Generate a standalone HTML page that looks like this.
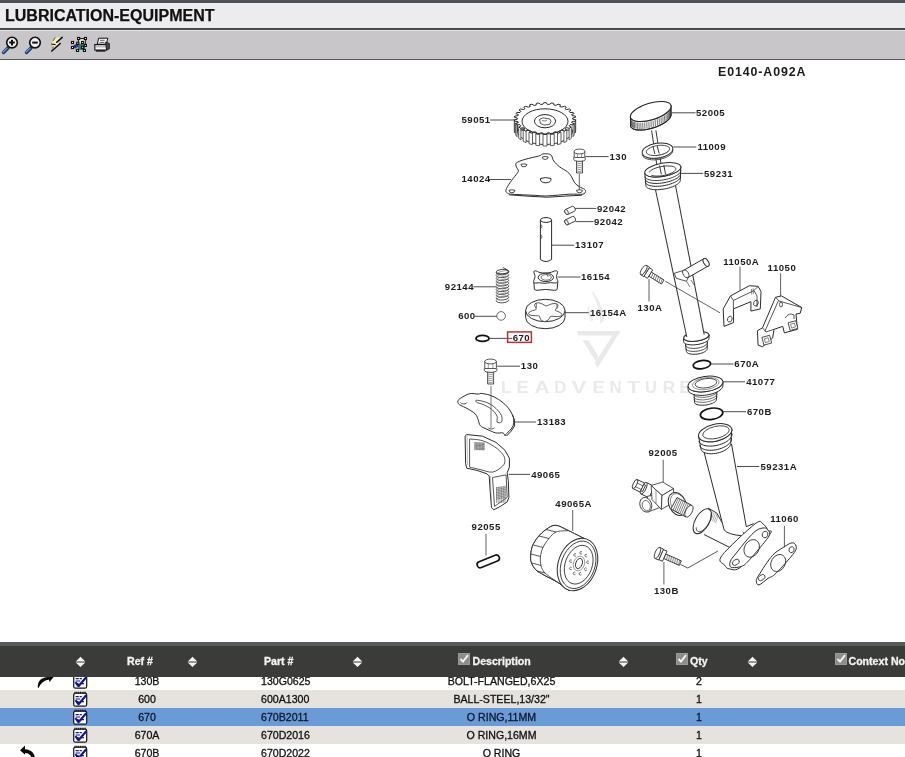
<!DOCTYPE html>
<html><head><meta charset="utf-8">
<style>
html,body{margin:0;padding:0;width:905px;height:757px;overflow:hidden;background:#fff;font-family:"Liberation Sans",sans-serif;}
.abs{position:absolute;}
#topbar{position:absolute;left:0;top:0;width:905px;height:3px;background:#4c5157;}
#title{position:absolute;left:0;top:3px;width:905px;height:25px;background:#ececee;}
#title span{position:absolute;left:5px;top:4px;font-size:16px;line-height:18px;font-weight:bold;color:#111;-webkit-text-stroke:0.25px #111;}
#line1{position:absolute;left:0;top:28px;width:905px;height:2px;background:#47494b;border-bottom:1px solid #e6e6e8;}
#toolbar{position:absolute;left:0;top:31px;width:905px;height:28px;background:#c8c6c9;}
#line2{position:absolute;left:0;top:59px;width:905px;height:1px;background:#555759;}
#diagram{position:absolute;left:0;top:0;width:905px;height:642px;}
#thead{position:absolute;left:0;top:642px;width:905px;height:35px;background:#3b3b39;border-top:4px solid #57595b;box-sizing:border-box;}
.th{position:absolute;top:8px;line-height:14px;color:#f4f4f4;-webkit-text-stroke:0.3px #f4f4f4;font-size:10.6px;font-weight:bold;white-space:nowrap;}
.row{position:absolute;left:0;width:905px;height:18px;}
.td{position:absolute;top:3px;line-height:13px;font-size:10.6px;color:#111;-webkit-text-stroke:0.3px #111;white-space:nowrap;}
.c{transform:translateX(-50%);}
.sel .td{color:#0c1830;-webkit-text-stroke:0.3px #0c1830;}
svg.ic{position:absolute;overflow:visible;}
#diagram,.row,#thead,#title{will-change:transform;}
</style></head><body>
<svg width="0" height="0" style="position:absolute">
 <defs>
  <g id="sorti"><path d="M-0.3 4.4 L4.5 -0.2 L9.3 4.4 Z M-0.3 5.4 L9.3 5.4 L4.5 10 Z" fill="#f4f4f4"/></g>
  <g id="hcb"><rect x="0.5" y="0.5" width="11" height="11" fill="#8d8d8b" stroke="#9a9a98"/><path d="M2.5 6 L5 8.6 L10 2.2" fill="none" stroke="#f4f4f4" stroke-width="1.9"/></g>
  <g id="note"><rect x="0.7" y="2.2" width="13" height="13" rx="1.8" fill="#fdfdfd" stroke="#111" stroke-width="1.2"/><path d="M1.5 1.6 h11.5" stroke="#111" stroke-width="1.6" stroke-dasharray="1 0.8"/><path d="M2.6 5.6 h3.2 M6.6 5.6 h2.2 M2.6 8 h4.5 M8 10.6 h3" stroke="#1a1a8c" stroke-width="1.1"/><path d="M2.4 9.2 L5.5 13.2 L13.2 4.2" fill="none" stroke="#14148f" stroke-width="2.1" stroke-linejoin="round"/><path d="M4 10.5 L5.6 12.6" stroke="#14148f" stroke-width="2.6"/></g>
 </defs>
</svg>
<div id="topbar"></div>
<div id="title"><span>LUBRICATION-EQUIPMENT</span></div>
<div id="line1"></div>
<div id="toolbar">
<svg class="ic" style="left:0;top:-1px" width="120" height="28">
 <!-- zoom in -->
 <path d="M3.5 22.5 L8.2 17.8" stroke="#1d3f6e" stroke-width="3.4" stroke-linecap="round"/>
 <path d="M3.2 22 L7 18.4" stroke="#6c9ccc" stroke-width="1.2" stroke-linecap="round"/>
 <circle cx="12" cy="12.6" r="5.3" fill="#f0f0f0" stroke="#111" stroke-width="1.6"/>
 <path d="M9.2 12.6 H14.8 M12 9.8 V15.4" stroke="#111" stroke-width="2"/>
 <!-- zoom out -->
 <path d="M26.5 22.5 L31.2 17.8" stroke="#1d3f6e" stroke-width="3.4" stroke-linecap="round"/>
 <path d="M26.2 22 L30 18.4" stroke="#6c9ccc" stroke-width="1.2" stroke-linecap="round"/>
 <circle cx="35" cy="12.6" r="5.3" fill="#f0f0f0" stroke="#111" stroke-width="1.6"/>
 <path d="M32.2 12.6 H37.8" stroke="#111" stroke-width="2"/>
  <!-- lightning -->
 <path d="M55.3 7.399999999999999 L62.2 7.399999999999999 L57.2 12.600000000000001 L60.2 13.5 L51.8 21 L53.5 16 L51.2 14 Z" fill="#f2f0b4"/>
 <path d="M62.2 7.399999999999999 L56.7 12.299999999999997" stroke="#0d0d0d" stroke-width="1.5" stroke-linecap="round"/>
 <path d="M60.2 13.5 L51.8 21" stroke="#0d0d0d" stroke-width="1.6" stroke-linecap="round"/>
 <path d="M51.2 14 L55.6 14.600000000000001" stroke="#111" stroke-width="1.1"/>
 <path d="M55.3 7.399999999999999 L53.2 10.799999999999997 M53.4 16.5 L52.6 18.5" stroke="#333" stroke-width="0.8"/>
 <!-- selection -->
 <path d="M71.5 47 L78 42.5 L80 46 L75 48.5 Z" fill="#3a2a8a" transform="translate(0 -30)"/>
 <rect x="79" y="9.5" width="6" height="4.5" fill="#f2ecc0"/>
 <rect x="78" y="13.5" width="7" height="6.5" rx="2" fill="#2e7f78"/>
 <path d="M78.6 8.5 H85.4 V15.4 M78.6 8.5 V13" stroke="#111" stroke-width="0.9" fill="none"/>
 <rect x="77.0" y="6.9" width="3.2" height="3.2" fill="#111"/><rect x="78.1" y="8.0" width="1" height="1" fill="#eee"/>
 <rect x="83.8" y="6.9" width="3.2" height="3.2" fill="#111"/><rect x="84.9" y="8.0" width="1" height="1" fill="#eee"/>
 <rect x="70.9" y="10.9" width="3.2" height="3.2" fill="#111"/><rect x="72.0" y="12.0" width="1" height="1" fill="#eee"/>
 <rect x="70.9" y="15.9" width="3.2" height="3.2" fill="#111"/><rect x="72.0" y="17.0" width="1" height="1" fill="#eee"/>
 <rect x="75.9" y="18.8" width="3.2" height="3.2" fill="#111"/><rect x="77.0" y="19.9" width="1" height="1" fill="#eee"/>
 <rect x="82.8" y="18.8" width="3.2" height="3.2" fill="#111"/><rect x="83.9" y="19.9" width="1" height="1" fill="#eee"/>
 <rect x="83.8" y="13.8" width="3.2" height="3.2" fill="#111"/><rect x="84.9" y="14.9" width="1" height="1" fill="#eee"/>
 <rect x="76.2" y="11.7" width="3.2" height="3.2" fill="#111"/><rect x="77.3" y="12.8" width="1" height="1" fill="#eee"/>
 <rect x="81.0" y="10.9" width="3.2" height="3.2" fill="#111"/><rect x="82.1" y="12.0" width="1" height="1" fill="#eee"/>
 <rect x="81.0" y="15.7" width="3.2" height="3.2" fill="#111"/><rect x="82.1" y="16.8" width="1" height="1" fill="#eee"/>
 <!-- printer -->
 <path d="M98.6 8.200000000000003 L107.8 8.200000000000003 L106.3 14.200000000000003 L97.3 14.200000000000003 Z" fill="#fafafa" stroke="#111" stroke-width="1"/>
 <path d="M99.9 10.299999999999997 H104.7 M99.6 12.399999999999999 H104.4" stroke="#222" stroke-width="0.7"/>
 <path d="M94.8 14.600000000000001 L106.8 14.600000000000001 L106.8 20 L94.8 20 Z" fill="#f6f6f6" stroke="#111" stroke-width="1.1"/>
 <path d="M95 16.799999999999997 H106" stroke="#666" stroke-width="0.6"/>
 <path d="M105.6 12 L109.4 13.5 L109.4 18.799999999999997 L106.5 20 Z" fill="#4a4a4a" stroke="#111" stroke-width="0.8"/>
 <path d="M95.8 20.9 L105.5 20.9" stroke="#0a0a0a" stroke-width="1.4"/>
</svg>
</div>
<div id="line2"></div>
<svg id="diagram" width="905" height="642" viewBox="0 0 905 642">
<style>.lb{font-family:"Liberation Sans",sans-serif;font-weight:bold;font-size:9.6px;letter-spacing:0.5px;fill:#1c1c1c}.code{font-family:"Liberation Sans",sans-serif;font-weight:bold;font-size:12.4px;letter-spacing:0.9px;fill:#1a1a1a}</style>
<text transform="translate(501.00 393) scale(1.061 1)" style="font:bold 16px 'Liberation Sans',sans-serif;fill:#eaeaea">L</text>
<text transform="translate(516.50 393) scale(1.140 1)" style="font:bold 16px 'Liberation Sans',sans-serif;fill:#eaeaea">E</text>
<text transform="translate(534.40 393) scale(1.293 1)" style="font:bold 16px 'Liberation Sans',sans-serif;fill:#eaeaea">A</text>
<text transform="translate(554.20 393) scale(1.052 1)" style="font:bold 16px 'Liberation Sans',sans-serif;fill:#eaeaea">D</text>
<text transform="translate(571.60 393) scale(1.402 1)" style="font:bold 16px 'Liberation Sans',sans-serif;fill:#eaeaea">V</text>
<text transform="translate(592.40 393) scale(1.140 1)" style="font:bold 16px 'Liberation Sans',sans-serif;fill:#eaeaea">E</text>
<text transform="translate(609.40 393) scale(1.052 1)" style="font:bold 16px 'Liberation Sans',sans-serif;fill:#eaeaea">N</text>
<text transform="translate(627.20 393) scale(1.306 1)" style="font:bold 16px 'Liberation Sans',sans-serif;fill:#eaeaea">T</text>
<text transform="translate(645.00 393) scale(1.034 1)" style="font:bold 16px 'Liberation Sans',sans-serif;fill:#eaeaea">U</text>
<text transform="translate(662.80 393) scale(1.078 1)" style="font:bold 16px 'Liberation Sans',sans-serif;fill:#eaeaea">R</text>
<text transform="translate(679.30 393) scale(1.140 1)" style="font:bold 16px 'Liberation Sans',sans-serif;fill:#eaeaea">E</text>
<path d="M576.9 331 L620.6 331 L597.6 367.8 L594.8 363 L612.5 335.6 L578.5 335.6 Z" fill="#e9e9e9"/>
<path d="M582.6 340.2 L588.5 340.2 L598.5 356.5 L595.8 361.5 Z" fill="#e9e9e9"/>
<path d="M590.7 289.6 C597 296 603 306 604.5 319.5 L600.5 324 C600 312 596 300 590.7 289.6 Z" fill="#ececec"/>
<path d="M588.4 304.5 C587 310 587.5 316 591 322 L593.5 320 C591 315 589.5 310 588.4 304.5 Z" fill="#eeeeee"/>
<text x="718" y="76.2" class="code">E0140-A092A</text>
<path d="M517.3 118.6 L517.3 130.1 L572.7 130.1 L572.6 131.2 L572.4 132.3 L571.9 133.4 L571.3 134.5 L570.6 135.6 L569.7 136.6 L568.6 137.6 L567.4 138.5 L566.1 139.4 L564.6 140.2 L563.0 141.0 L561.3 141.7 L559.5 142.3 L557.6 142.9 L555.6 143.4 L553.6 143.7 L551.5 144.0 L549.3 144.3 L547.2 144.4 L545.0 144.4 L542.8 144.4 L540.7 144.3 L538.5 144.0 L536.4 143.7 L534.4 143.4 L532.4 142.9 L530.5 142.3 L528.7 141.7 L527.0 141.0 L525.4 140.2 L523.9 139.4 L522.6 138.5 L521.4 137.6 L520.3 136.6 L519.4 135.6 L518.7 134.5 L518.1 133.4 L517.6 132.3 L517.4 131.2 L517.3 130.1 L572.7 118.6 Z" fill="#fff" stroke="#2b2b2b" stroke-width="1.0"/>
<path d="M575.7 119.5 L575.2 121.5 L575.2 133.0 L575.7 131.0 Z" fill="#fff" stroke="#2b2b2b" stroke-width="0.75" />
<path d="M574.3 123.3 L573.0 125.2 L573.0 136.7 L574.3 134.8 Z" fill="#fff" stroke="#2b2b2b" stroke-width="0.75" />
<path d="M571.3 126.8 L569.1 128.4 L569.1 139.9 L571.3 138.3 Z" fill="#fff" stroke="#2b2b2b" stroke-width="0.75" />
<path d="M566.8 129.8 L563.9 131.1 L563.9 142.6 L566.8 141.3 Z" fill="#fff" stroke="#2b2b2b" stroke-width="0.75" />
<path d="M561.0 132.2 L557.5 133.1 L557.5 144.6 L561.0 143.7 Z" fill="#fff" stroke="#2b2b2b" stroke-width="0.75" />
<path d="M554.2 133.8 L550.4 134.2 L550.4 145.7 L554.2 145.3 Z" fill="#fff" stroke="#2b2b2b" stroke-width="0.75" />
<path d="M547.0 134.5 L543.0 134.5 L543.0 146.0 L547.0 146.0 Z" fill="#fff" stroke="#2b2b2b" stroke-width="0.75" />
<path d="M539.6 134.2 L535.8 133.8 L535.8 145.3 L539.6 145.7 Z" fill="#fff" stroke="#2b2b2b" stroke-width="0.75" />
<path d="M532.5 133.1 L529.0 132.2 L529.0 143.7 L532.5 144.6 Z" fill="#fff" stroke="#2b2b2b" stroke-width="0.75" />
<path d="M526.1 131.1 L523.2 129.8 L523.2 141.3 L526.1 142.6 Z" fill="#fff" stroke="#2b2b2b" stroke-width="0.75" />
<path d="M520.9 128.4 L518.7 126.8 L518.7 138.3 L520.9 139.9 Z" fill="#fff" stroke="#2b2b2b" stroke-width="0.75" />
<path d="M517.0 125.2 L515.7 123.3 L515.7 134.8 L517.0 136.7 Z" fill="#fff" stroke="#2b2b2b" stroke-width="0.75" />
<path d="M514.8 121.5 L514.3 119.5 L514.3 131.0 L514.8 133.0 Z" fill="#fff" stroke="#2b2b2b" stroke-width="0.75" />
<path d="M572.7 119.2 L575.6 119.9 L575.3 121.2 L572.1 121.5 L571.6 122.6 L574.1 123.6 L573.2 124.8 L570.0 124.7 L569.0 125.8 L571.0 127.1 L569.5 128.2 L566.5 127.7 L565.0 128.5 L566.3 130.1 L564.4 130.9 L561.7 130.1 L559.8 130.7 L560.4 132.4 L558.1 133.0 L555.9 131.8 L553.8 132.2 L553.6 133.9 L551.1 134.2 L549.5 132.8 L547.2 132.9 L546.3 134.5 L543.7 134.5 L542.8 132.9 L540.5 132.8 L538.9 134.2 L536.4 133.9 L536.2 132.2 L534.1 131.8 L531.9 133.0 L529.6 132.4 L530.2 130.7 L528.3 130.1 L525.6 130.9 L523.7 130.1 L525.0 128.5 L523.5 127.7 L520.5 128.2 L519.0 127.1 L521.0 125.8 L520.0 124.7 L516.8 124.8 L515.9 123.6 L518.4 122.6 L517.9 121.5 L514.7 121.2 L514.4 119.9 L517.3 119.2 L517.3 118.0 L514.4 117.3 L514.7 116.0 L517.9 115.7 L518.4 114.6 L515.9 113.6 L516.8 112.4 L520.0 112.5 L521.0 111.4 L519.0 110.1 L520.5 109.0 L523.5 109.5 L525.0 108.7 L523.7 107.1 L525.6 106.3 L528.3 107.1 L530.2 106.5 L529.6 104.8 L531.9 104.2 L534.1 105.4 L536.2 105.0 L536.4 103.3 L538.9 103.0 L540.5 104.4 L542.8 104.3 L543.7 102.7 L546.3 102.7 L547.2 104.3 L549.5 104.4 L551.1 103.0 L553.6 103.3 L553.8 105.0 L555.9 105.4 L558.1 104.2 L560.4 104.8 L559.8 106.5 L561.7 107.1 L564.4 106.3 L566.3 107.1 L565.0 108.7 L566.5 109.5 L569.5 109.0 L571.0 110.1 L569.0 111.4 L570.0 112.5 L573.2 112.4 L574.1 113.6 L571.6 114.6 L572.1 115.7 L575.3 116.0 L575.6 117.3 L572.7 118.0 Z" fill="#fff" stroke="#2b2b2b" stroke-width="1.0" />
<ellipse cx="545.0" cy="121.4" rx="23.0" ry="12.6" transform="rotate(0 545.0 121.4)" fill="none" stroke="#2b2b2b" stroke-width="1.0"/>
<ellipse cx="545.0" cy="121.2" rx="10.6" ry="6.6" transform="rotate(0 545.0 121.2)" fill="none" stroke="#2b2b2b" stroke-width="1.0"/>
<path d="M539.5 119.5 L543 117.8 L546 118.3 L550 119 L551 121.5 L549.5 124.5 L544 125 L540.5 123.5 Z" fill="none" stroke="#2b2b2b" stroke-width="0.8" />
<path d="M542 120.5 L545 121 L547 120" fill="none" stroke="#2b2b2b" stroke-width="0.6" />
<line x1="490.0" y1="120.0" x2="514.5" y2="120.0" stroke="#383838" stroke-width="0.9"/>
<text x="461.5" y="123.4" class="lb">59051</text>
<path d="M516.4 162.9 C517.8 161.7 521.2 160.6 524.9 159.4 C528.6 158.2 535.8 156.9 538.8 156.0 C541.8 155.1 541.1 154.3 542.7 154.0 C544.4 153.7 547.2 153.7 548.7 154.0 C550.2 154.3 550.9 154.8 551.7 156.0 C552.5 157.2 552.4 159.1 553.7 160.9 C555.0 162.7 557.3 165.1 559.6 166.9 C561.9 168.7 565.6 170.2 567.6 171.9 C569.6 173.6 570.4 175.0 571.6 176.8 C572.8 178.6 573.3 181.1 574.6 182.8 C575.9 184.5 577.9 185.7 579.5 186.8 C581.1 187.9 583.5 188.5 584.5 189.3 C585.5 190.1 585.8 190.9 585.5 191.7 C585.2 192.5 585.1 193.8 582.5 194.2 C579.9 194.6 575.4 193.9 569.6 194.2 C563.8 194.5 553.3 195.7 547.7 195.9 C542.1 196.1 541.8 195.7 535.8 195.4 C529.8 195.1 516.7 194.6 511.9 194.2 C507.1 193.8 508.0 193.4 507.0 192.7 C506.0 192.0 505.5 191.5 506.0 189.8 C506.5 188.2 508.2 185.3 509.9 182.8 C511.5 180.3 514.5 176.9 515.9 174.9 C517.3 172.9 518.3 172.2 518.4 170.9 C518.5 169.6 516.7 168.2 516.4 166.9 C516.1 165.6 515.0 164.2 516.4 162.9 Z" fill="#fff" stroke="#2b2b2b" stroke-width="1.0" />
<path d="M509 194.8 Q530 196.5 547.7 197.2 Q566 196 582 195.2" fill="none" stroke="#2b2b2b" stroke-width="1.0" />
<path d="M520.9 164.4 Q523.9 163.3 526.9 164.4 Q526.6 167.0 523.9 166.8 Q521.2 167.0 520.9 164.4 Z" fill="none" stroke="#2b2b2b" stroke-width="0.85" />
<path d="M542.2 157.0 Q545.2 155.9 548.2 157.0 Q547.9 159.6 545.2 159.4 Q542.5 159.6 542.2 157.0 Z" fill="none" stroke="#2b2b2b" stroke-width="0.85" />
<path d="M508.9 190.3 Q511.9 189.2 514.9 190.3 Q514.6 192.9 511.9 192.7 Q509.2 192.9 508.9 190.3 Z" fill="none" stroke="#2b2b2b" stroke-width="0.85" />
<path d="M576.5 190.3 Q579.5 189.2 582.5 190.3 Q582.2 192.9 579.5 192.7 Q576.8 192.9 576.5 190.3 Z" fill="none" stroke="#2b2b2b" stroke-width="0.85" />
<path d="M540.4 178.5 Q545.7 176.6 551 178.5 Q551.5 182.6 545.7 182.8 Q540 182.6 540.4 178.5 Z" fill="none" stroke="#2b2b2b" stroke-width="1.0" />
<line x1="488.0" y1="179.5" x2="511.0" y2="179.5" stroke="#383838" stroke-width="0.9"/>
<text x="461.5" y="182.4" class="lb">14024</text>
<path d="M576.5 160 L576.5 173 L582.5 173 L582.5 160 Z" fill="#fff" stroke="#2b2b2b" stroke-width="0.8" />
<line x1="576.5" y1="162.1" x2="582.5" y2="160.9" stroke="#555" stroke-width="0.6"/>
<line x1="576.5" y1="164.1" x2="582.5" y2="162.9" stroke="#555" stroke-width="0.6"/>
<line x1="576.5" y1="166.1" x2="582.5" y2="164.9" stroke="#555" stroke-width="0.6"/>
<line x1="576.5" y1="168.1" x2="582.5" y2="166.9" stroke="#555" stroke-width="0.6"/>
<line x1="576.5" y1="170.1" x2="582.5" y2="168.9" stroke="#555" stroke-width="0.6"/>
<line x1="576.5" y1="172.1" x2="582.5" y2="170.9" stroke="#555" stroke-width="0.6"/>
<path d="M573.7 157.5 L573.7 159.5 A5.8 1.8 0 0 0 585.3 159.5 L585.3 157.5" fill="#fff" stroke="#2b2b2b" stroke-width="0.8" />
<path d="M574.2 151.5 L574.2 157.5 L584.8 157.5 L584.8 151.5 Z" fill="#fff" stroke="#2b2b2b" stroke-width="0.8" />
<ellipse cx="579.5" cy="151.5" rx="5.3" ry="2.4" transform="rotate(0 579.5 151.5)" fill="#fff" stroke="#2b2b2b" stroke-width="0.8"/>
<line x1="577.4" y1="153.5" x2="577.4" y2="157.5" stroke="#555" stroke-width="0.6"/>
<line x1="581.6" y1="153.5" x2="581.6" y2="157.5" stroke="#555" stroke-width="0.6"/>
<line x1="579.3" y1="174.0" x2="579.3" y2="190.0" stroke="#383838" stroke-width="0.8"/>
<line x1="585.5" y1="156.6" x2="608.7" y2="156.6" stroke="#383838" stroke-width="0.9"/>
<text x="609.5" y="159.5" class="lb">130</text>
<g transform="translate(566.5 212) rotate(-24.6)">
<path d="M0 -2.7 L7.7 -2.7 A1.49 2.7 0 0 1 7.7 2.7 L0 2.7 A1.49 2.7 0 0 1 0 -2.7 Z" fill="#fff" stroke="#2b2b2b" stroke-width="0.8" />
<ellipse cx="0.0" cy="0.0" rx="1.5" ry="2.7" transform="rotate(0 0.0 0.0)" fill="#fff" stroke="#2b2b2b" stroke-width="0.8"/>
</g>
<g transform="translate(566.5 222.3) rotate(-25.6)">
<path d="M0 -2.7 L8.1 -2.7 A1.49 2.7 0 0 1 8.1 2.7 L0 2.7 A1.49 2.7 0 0 1 0 -2.7 Z" fill="#fff" stroke="#2b2b2b" stroke-width="0.8" />
<ellipse cx="0.0" cy="0.0" rx="1.5" ry="2.7" transform="rotate(0 0.0 0.0)" fill="#fff" stroke="#2b2b2b" stroke-width="0.8"/>
</g>
<line x1="575.0" y1="208.4" x2="596.3" y2="208.4" stroke="#383838" stroke-width="0.9"/>
<text x="597.0" y="211.7" class="lb">92042</text>
<line x1="575.5" y1="221.6" x2="593.5" y2="221.6" stroke="#383838" stroke-width="0.9"/>
<text x="594.0" y="225.0" class="lb">92042</text>
<path d="M540.4 220 L540.4 259.5 Q546 263.5 551.6 259.5 L551.6 220" fill="#fff" stroke="#2b2b2b" stroke-width="1.0" />
<ellipse cx="546.0" cy="220.0" rx="5.6" ry="2.4" transform="rotate(0 546.0 220.0)" fill="#fff" stroke="#2b2b2b" stroke-width="1.0"/>
<path d="M540.6 224.6 a1.3 1.8 0 0 1 0 3.6" fill="none" stroke="#2b2b2b" stroke-width="0.7" />
<path d="M540.6 235 a1.3 1.8 0 0 1 0 3.6" fill="none" stroke="#2b2b2b" stroke-width="0.7" />
<line x1="551.6" y1="245.2" x2="574.2" y2="245.2" stroke="#383838" stroke-width="0.9"/>
<text x="575.0" y="247.7" class="lb">13107</text>
<path d="M533.8 281.8 L534.4 289 Q535 290.5 537 290.3 Q545 288.6 554.5 290.3 Q557 290.5 557.2 289 L557.8 281.5" fill="#fff" stroke="#2b2b2b" stroke-width="1.0" />
<path d="M535.5 270.8 C536.5 270.9 538.4 272.2 540.0 272.6 C541.6 273.0 543.3 273.0 545.0 273.0 C546.7 273.0 548.2 273.0 550.0 272.6 C551.8 272.2 554.2 270.9 555.5 270.8 C556.8 270.7 557.5 271.1 557.6 272.0 C557.8 272.9 556.4 274.9 556.4 276.5 C556.4 278.1 557.9 280.4 557.8 281.5 C557.6 282.6 556.7 282.8 555.5 283.0 C554.3 283.2 552.2 282.6 550.5 282.6 C548.8 282.7 546.8 283.3 545.0 283.3 C543.2 283.3 541.2 282.9 539.5 282.8 C537.8 282.8 536.0 283.2 535.0 283.0 C534.0 282.8 533.6 282.6 533.6 281.5 C533.6 280.4 535.0 278.1 535.0 276.5 C535.0 274.9 533.7 272.9 533.8 272.0 C533.9 271.1 534.5 270.7 535.5 270.8 Z" fill="#fff" stroke="#2b2b2b" stroke-width="1.0" />
<ellipse cx="545.8" cy="277.4" rx="7.7" ry="4.2" transform="rotate(0 545.8 277.4)" fill="#fff" stroke="#2b2b2b" stroke-width="1.0"/>
<ellipse cx="546.2" cy="277.4" rx="5.2" ry="2.8" transform="rotate(0 546.2 277.4)" fill="none" stroke="#2b2b2b" stroke-width="0.7"/>
<path d="M546 274 Q548 275 548 277" fill="none" stroke="#2b2b2b" stroke-width="0.6" />
<line x1="557.5" y1="277.0" x2="580.5" y2="277.0" stroke="#383838" stroke-width="0.9"/>
<text x="581.0" y="280.2" class="lb">16154</text>
<path d="M525.6 310.5 L525.6 317.5 A19.7 11.2 0 0 0 565 317.5 L565 310.5" fill="#fff" stroke="#2b2b2b" stroke-width="1.0" />
<ellipse cx="545.3" cy="310.5" rx="19.7" ry="11.2" transform="rotate(0 545.3 310.5)" fill="#fff" stroke="#2b2b2b" stroke-width="1.0"/>
<path d="M558.0 311.5 C558.6 311.8 559.3 312.0 559.9 312.4 C560.4 312.7 561.0 313.1 561.3 313.4 C561.7 313.8 561.9 314.2 562.0 314.5 C562.0 314.9 561.8 315.3 561.5 315.5 C561.1 315.8 560.6 316.1 559.9 316.2 C559.3 316.4 558.5 316.5 557.7 316.5 C556.9 316.6 556.0 316.5 555.3 316.5 C554.5 316.5 553.7 316.4 553.1 316.3 C552.5 316.3 552.0 316.2 551.5 316.2 C551.1 316.3 550.8 316.3 550.6 316.5 C550.3 316.6 550.1 316.9 549.9 317.2 C549.7 317.5 549.6 317.9 549.4 318.3 C549.1 318.7 548.9 319.1 548.5 319.5 C548.1 319.9 547.7 320.4 547.2 320.7 C546.7 321.0 546.1 321.2 545.5 321.3 C544.9 321.5 544.3 321.5 543.7 321.4 C543.1 321.3 542.5 321.1 542.0 320.8 C541.6 320.5 541.2 320.1 540.8 319.6 C540.5 319.2 540.3 318.7 540.2 318.3 C540.0 317.9 539.9 317.5 539.8 317.1 C539.7 316.8 539.6 316.4 539.5 316.2 C539.3 316.0 539.1 315.9 538.7 315.8 C538.4 315.7 537.9 315.7 537.4 315.7 C536.8 315.6 536.1 315.7 535.4 315.7 C534.6 315.7 533.8 315.7 533.0 315.6 C532.2 315.5 531.4 315.4 530.7 315.2 C530.0 315.1 529.4 314.8 529.0 314.5 C528.7 314.3 528.4 313.9 528.4 313.6 C528.4 313.2 528.6 312.8 528.9 312.5 C529.3 312.1 529.8 311.8 530.4 311.5 C531.0 311.2 531.8 310.9 532.4 310.7 C533.1 310.5 533.8 310.3 534.4 310.2 C534.9 310.0 535.4 309.9 535.7 309.7 C536.0 309.5 536.2 309.4 536.3 309.2 C536.3 308.9 536.2 308.7 536.0 308.4 C535.9 308.1 535.6 307.7 535.4 307.3 C535.2 306.9 534.9 306.5 534.8 306.0 C534.6 305.6 534.6 305.1 534.7 304.7 C534.8 304.2 535.0 303.8 535.3 303.5 C535.7 303.2 536.2 303.0 536.8 302.9 C537.3 302.8 538.0 302.8 538.7 302.8 C539.4 302.9 540.2 303.1 540.8 303.4 C541.5 303.6 542.2 303.9 542.8 304.2 C543.3 304.5 543.9 304.8 544.3 305.1 C544.8 305.3 545.1 305.5 545.5 305.7 C545.9 305.8 546.2 305.8 546.6 305.8 C546.9 305.7 547.3 305.6 547.8 305.4 C548.2 305.3 548.8 305.0 549.4 304.7 C550.0 304.5 550.7 304.2 551.4 304.0 C552.1 303.8 552.9 303.6 553.6 303.5 C554.3 303.4 555.1 303.4 555.7 303.5 C556.3 303.6 556.8 303.8 557.2 304.1 C557.6 304.4 557.8 304.8 557.9 305.2 C558.0 305.6 557.9 306.0 557.7 306.5 C557.5 306.9 557.2 307.4 556.9 307.8 C556.6 308.2 556.2 308.5 555.9 308.9 C555.6 309.2 555.4 309.5 555.3 309.7 C555.2 309.9 555.2 310.1 555.4 310.3 C555.6 310.5 555.9 310.7 556.4 310.9 C556.8 311.0 557.4 311.2 558.0 311.5 Z" fill="#fff" stroke="#2b2b2b" stroke-width="0.8" />
<line x1="536.2" y1="303.0" x2="536.5" y2="307.8" stroke="#383838" stroke-width="0.7"/>
<line x1="556.8" y1="303.9" x2="557.1" y2="308.7" stroke="#383838" stroke-width="0.7"/>
<line x1="565.0" y1="312.7" x2="588.8" y2="312.7" stroke="#383838" stroke-width="0.9"/>
<text x="590.0" y="315.9" class="lb">16154A</text>
<path d="M502.7 267.5 Q507 268.5 507.9 271.5" fill="none" stroke="#2b2b2b" stroke-width="0.8" />
<path d="M496.2 272.5 C496.2 276.1 508.8 275.3 508.8 271.7" fill="none" stroke="#2b2b2b" stroke-width="0.85" />
<path d="M508.8 271.7 C508.8 269.3 497 271.0 496.2 275.3" fill="none" stroke="#555" stroke-width="0.6" />
<path d="M496.2 275.3 C496.2 278.9 508.8 278.1 508.8 274.5" fill="none" stroke="#2b2b2b" stroke-width="0.85" />
<path d="M508.8 274.5 C508.8 272.1 497 273.8 496.2 278.1" fill="none" stroke="#555" stroke-width="0.6" />
<path d="M496.2 278.1 C496.2 281.7 508.8 280.9 508.8 277.3" fill="none" stroke="#2b2b2b" stroke-width="0.85" />
<path d="M508.8 277.3 C508.8 274.9 497 276.6 496.2 280.9" fill="none" stroke="#555" stroke-width="0.6" />
<path d="M496.2 280.9 C496.2 284.5 508.8 283.7 508.8 280.1" fill="none" stroke="#2b2b2b" stroke-width="0.85" />
<path d="M508.8 280.1 C508.8 277.7 497 279.4 496.2 283.7" fill="none" stroke="#555" stroke-width="0.6" />
<path d="M496.2 283.7 C496.2 287.3 508.8 286.5 508.8 282.9" fill="none" stroke="#2b2b2b" stroke-width="0.85" />
<path d="M508.8 282.9 C508.8 280.5 497 282.2 496.2 286.5" fill="none" stroke="#555" stroke-width="0.6" />
<path d="M496.2 286.5 C496.2 290.1 508.8 289.3 508.8 285.7" fill="none" stroke="#2b2b2b" stroke-width="0.85" />
<path d="M508.8 285.7 C508.8 283.3 497 285.0 496.2 289.3" fill="none" stroke="#555" stroke-width="0.6" />
<path d="M496.2 289.3 C496.2 292.9 508.8 292.1 508.8 288.5" fill="none" stroke="#2b2b2b" stroke-width="0.85" />
<path d="M508.8 288.5 C508.8 286.1 497 287.8 496.2 292.1" fill="none" stroke="#555" stroke-width="0.6" />
<path d="M496.2 292.1 C496.2 295.7 508.8 294.9 508.8 291.3" fill="none" stroke="#2b2b2b" stroke-width="0.85" />
<path d="M508.8 291.3 C508.8 288.9 497 290.6 496.2 294.9" fill="none" stroke="#555" stroke-width="0.6" />
<path d="M496.2 294.9 C496.2 298.5 508.8 297.7 508.8 294.1" fill="none" stroke="#2b2b2b" stroke-width="0.85" />
<path d="M508.8 294.1 C508.8 291.7 497 293.4 496.2 297.7" fill="none" stroke="#555" stroke-width="0.6" />
<path d="M496.2 297.7 C496.2 301.3 508.8 300.5 508.8 296.9" fill="none" stroke="#2b2b2b" stroke-width="0.85" />
<path d="M508.8 296.9 C508.8 294.5 497 296.2 496.2 300.5" fill="none" stroke="#555" stroke-width="0.6" />
<path d="M496.2 300.5 C496.2 304.1 508.8 303.3 508.8 299.7" fill="none" stroke="#2b2b2b" stroke-width="0.85" />
<ellipse cx="502.5" cy="271.6" rx="6.3" ry="2.2" transform="rotate(-4 502.5 271.6)" fill="none" stroke="#2b2b2b" stroke-width="0.85"/>
<line x1="473.3" y1="286.8" x2="496.0" y2="286.8" stroke="#383838" stroke-width="0.9"/>
<text x="444.8" y="289.8" class="lb">92144</text>
<circle cx="501.1" cy="315.9" r="4.3" fill="#fff" stroke="#444" stroke-width="0.8"/>
<line x1="475.0" y1="316.3" x2="496.8" y2="316.3" stroke="#383838" stroke-width="0.9"/>
<text x="458.2" y="319.0" class="lb">600</text>
<ellipse cx="482.5" cy="338.4" rx="6.5" ry="3.0" transform="rotate(0 482.5 338.4)" fill="none" stroke="#111" stroke-width="1.8"/>
<line x1="489.2" y1="338.4" x2="512.3" y2="338.4" stroke="#383838" stroke-width="0.9"/>
<rect x="507.6" y="331.9" width="23.8" height="10.5" fill="none" stroke="#b8303c" stroke-width="1.5"/>
<text x="512.7" y="341.3" class="lb">670</text>
<path d="M487.6 371 L487.6 384 L493.6 384 L493.6 371 Z" fill="#fff" stroke="#2b2b2b" stroke-width="0.8" />
<line x1="487.6" y1="373.1" x2="493.6" y2="371.9" stroke="#555" stroke-width="0.6"/>
<line x1="487.6" y1="375.1" x2="493.6" y2="373.9" stroke="#555" stroke-width="0.6"/>
<line x1="487.6" y1="377.1" x2="493.6" y2="375.9" stroke="#555" stroke-width="0.6"/>
<line x1="487.6" y1="379.1" x2="493.6" y2="377.9" stroke="#555" stroke-width="0.6"/>
<line x1="487.6" y1="381.1" x2="493.6" y2="379.9" stroke="#555" stroke-width="0.6"/>
<line x1="487.6" y1="383.1" x2="493.6" y2="381.9" stroke="#555" stroke-width="0.6"/>
<path d="M484.3 368.5 L484.3 370.5 A6.3 1.8 0 0 0 496.90000000000003 370.5 L496.90000000000003 368.5" fill="#fff" stroke="#2b2b2b" stroke-width="0.8" />
<path d="M484.8 361.5 L484.8 368.5 L496.40000000000003 368.5 L496.40000000000003 361.5 Z" fill="#fff" stroke="#2b2b2b" stroke-width="0.8" />
<ellipse cx="490.6" cy="361.5" rx="5.8" ry="2.4" transform="rotate(0 490.6 361.5)" fill="#fff" stroke="#2b2b2b" stroke-width="0.8"/>
<line x1="488.3" y1="363.5" x2="488.3" y2="368.5" stroke="#555" stroke-width="0.6"/>
<line x1="492.9" y1="363.5" x2="492.9" y2="368.5" stroke="#555" stroke-width="0.6"/>
<line x1="497.2" y1="366.2" x2="520.0" y2="366.2" stroke="#383838" stroke-width="0.9"/>
<text x="520.8" y="369.0" class="lb">130</text>
<path d="M457.9 401.0 C458.1 399.9 458.9 399.3 460.8 398.1 C462.7 396.9 466.6 394.4 469.5 393.7 C472.4 393.0 476.3 394.2 478.2 394.1 C480.1 394.1 479.2 393.2 481.1 393.4 C483.1 393.6 487.0 394.2 489.9 395.2 C492.8 396.2 495.7 397.6 498.6 399.5 C501.5 401.4 505.0 404.2 507.3 406.8 C509.6 409.4 511.3 412.6 512.4 414.8 C513.5 417.0 513.7 418.1 513.8 419.9 C513.9 421.7 513.7 424.0 513.1 425.7 C512.5 427.4 511.4 428.6 510.2 430.0 C509.0 431.4 506.6 433.4 505.8 434.4 C505.0 435.4 505.6 436.1 505.1 435.8 C504.6 435.6 504.5 433.4 502.9 432.9 C501.3 432.4 498.3 433.5 495.7 432.9 C493.1 432.3 489.6 430.5 487.0 429.3 C484.4 428.1 481.9 427.3 480.4 425.7 C478.9 424.1 479.0 421.8 478.2 419.9 C477.4 417.9 477.0 415.8 475.3 414.0 C473.6 412.2 470.8 410.6 468.1 409.0 C465.5 407.4 461.1 405.9 459.4 404.6 C457.7 403.3 457.7 402.1 457.9 401.0 Z" fill="#fff" stroke="#2b2b2b" stroke-width="1.0" />
<path d="M512.4 414.8 Q515.5 420 514.6 426 Q512 431 506.5 436" fill="none" stroke="#2b2b2b" stroke-width="1.0" />
<path d="M476.1 400.3 C477.1 400.1 480.7 400.7 483.0 401.3 C485.3 401.9 487.7 402.7 489.9 403.9 C492.1 405.1 494.1 406.6 496.0 408.5 C497.9 410.4 500.6 413.2 501.5 415.5 C502.4 417.8 502.2 420.9 501.5 422.0 C500.8 423.1 497.8 423.0 497.1 422.0 C496.4 421.0 497.9 418.2 497.1 416.2 C496.3 414.2 494.1 411.6 492.5 410.0 C490.9 408.4 489.4 407.8 487.7 406.8 C485.9 405.8 483.8 404.7 482.0 404.0 C480.2 403.3 477.8 403.0 476.8 402.4 C475.8 401.8 475.1 400.5 476.1 400.3 Z" fill="#fff" stroke="#2b2b2b" stroke-width="0.8" />
<path d="M460.5 402.4 A3.3 1.9 0 0 0 467 402.4" fill="none" stroke="#2b2b2b" stroke-width="0.8" />
<path d="M488.3 427.5 A3 1.5 0 0 0 494.3 427.5" fill="none" stroke="#2b2b2b" stroke-width="0.8" />
<line x1="491.0" y1="386.0" x2="491.0" y2="428.0" stroke="#555" stroke-width="0.8"/>
<line x1="514.0" y1="422.0" x2="536.0" y2="422.0" stroke="#383838" stroke-width="0.9"/>
<text x="537.0" y="425.2" class="lb">13183</text>
<path d="M465.1 436.2 L466.7 434.5 L482.5 436.2 L496.0 442.4 L504.9 450.2 L509.4 458.1 L509.4 467.1 L507.2 472.7 L508.3 480.6 L508.9 497.4 L507.2 501.9 L500.4 506.4 L493.7 509.8 L491.5 507.5 L490.3 492.9 L489.2 476.1 L487.0 473.8 L476.9 470.4 L466.7 468.2 L465.6 463.7 Z" fill="#fff" stroke="#2b2b2b" stroke-width="1.0" />
<path d="M469.6 439.0 C471.8 439.3 478.3 439.4 482.5 440.7 C486.7 442.0 491.4 444.6 494.8 446.9 C498.2 449.1 501.0 452.0 502.7 454.2 C504.4 456.4 504.9 458.3 504.9 460.3 C504.9 462.3 504.8 464.0 502.7 466.0 C500.6 468.0 496.4 471.5 492.6 472.1 C488.8 472.7 483.8 470.3 480.0 469.5 C476.2 468.7 471.3 467.5 469.6 467.1" fill="#fff" stroke="#2b2b2b" stroke-width="0.8" />
<path d="M469.6 439 L469.6 467.1" fill="none" stroke="#2b2b2b" stroke-width="0.8" />
<path d="M492.5 477.5 L506.1 474.9 L507.2 497.4 L494.5 506.4 Z" fill="#fff" stroke="#2b2b2b" stroke-width="0.8" />
<path d="M467 435 L467.5 465 M490.3 476 L491.5 506" fill="none" stroke="#777" stroke-width="0.5" />
<g stroke="#444" stroke-width="0.55">
<line x1="474.6" y1="442.6" x2="484.7" y2="443.3" stroke="#555" stroke-width="0.55"/>
<line x1="474.6" y1="443.9" x2="484.7" y2="444.6" stroke="#555" stroke-width="0.55"/>
<line x1="474.6" y1="445.2" x2="484.7" y2="445.9" stroke="#555" stroke-width="0.55"/>
<line x1="474.6" y1="446.5" x2="484.7" y2="447.2" stroke="#555" stroke-width="0.55"/>
<line x1="474.6" y1="447.8" x2="484.7" y2="448.5" stroke="#555" stroke-width="0.55"/>
<line x1="474.6" y1="449.1" x2="484.7" y2="449.8" stroke="#555" stroke-width="0.55"/>
<line x1="474.8" y1="442.3" x2="474.8" y2="450.2" stroke="#555" stroke-width="0.55"/>
<line x1="476.3" y1="442.3" x2="476.3" y2="450.2" stroke="#555" stroke-width="0.55"/>
<line x1="477.8" y1="442.3" x2="477.8" y2="450.2" stroke="#555" stroke-width="0.55"/>
<line x1="479.3" y1="442.3" x2="479.3" y2="450.2" stroke="#555" stroke-width="0.55"/>
<line x1="480.8" y1="442.3" x2="480.8" y2="450.2" stroke="#555" stroke-width="0.55"/>
<line x1="482.3" y1="442.3" x2="482.3" y2="450.2" stroke="#555" stroke-width="0.55"/>
<line x1="483.8" y1="442.3" x2="483.8" y2="450.2" stroke="#555" stroke-width="0.55"/>
<line x1="496.0" y1="488.0" x2="506.0" y2="486.0" stroke="#555" stroke-width="0.55"/>
<line x1="496.0" y1="489.6" x2="506.0" y2="487.6" stroke="#555" stroke-width="0.55"/>
<line x1="496.0" y1="491.2" x2="506.0" y2="489.2" stroke="#555" stroke-width="0.55"/>
<line x1="496.0" y1="492.8" x2="506.0" y2="490.8" stroke="#555" stroke-width="0.55"/>
<line x1="496.0" y1="494.4" x2="506.0" y2="492.4" stroke="#555" stroke-width="0.55"/>
<line x1="496.0" y1="496.0" x2="506.0" y2="494.0" stroke="#555" stroke-width="0.55"/>
<line x1="496.0" y1="497.6" x2="506.0" y2="495.6" stroke="#555" stroke-width="0.55"/>
<line x1="496.0" y1="499.2" x2="506.0" y2="497.2" stroke="#555" stroke-width="0.55"/>
<line x1="496.5" y1="487.0" x2="496.5" y2="503.0" stroke="#555" stroke-width="0.55"/>
<line x1="498.2" y1="487.0" x2="498.2" y2="503.0" stroke="#555" stroke-width="0.55"/>
<line x1="499.9" y1="487.0" x2="499.9" y2="503.0" stroke="#555" stroke-width="0.55"/>
<line x1="501.6" y1="487.0" x2="501.6" y2="503.0" stroke="#555" stroke-width="0.55"/>
<line x1="503.3" y1="487.0" x2="503.3" y2="503.0" stroke="#555" stroke-width="0.55"/>
<line x1="505.0" y1="487.0" x2="505.0" y2="503.0" stroke="#555" stroke-width="0.55"/>
</g>
<line x1="508.8" y1="474.4" x2="530.2" y2="474.4" stroke="#383838" stroke-width="0.9"/>
<text x="531.2" y="477.7" class="lb">49065</text>
<rect x="476.5" y="558.2" width="23.5" height="6.3" rx="3.1" transform="rotate(-22 488.2 561.3)" fill="none" stroke="#111" stroke-width="1.6"/>
<line x1="486.0" y1="533.9" x2="486.0" y2="555.5" stroke="#383838" stroke-width="0.8"/>
<text x="471.6" y="530.2" class="lb">92055</text>
<path d="M584.2 538.5 C581.6 537.2 573.0 532.8 568.3 530.6 C563.5 528.4 559.4 525.5 555.7 525.3 C552.0 525.1 549.1 527.5 546.1 529.5 C543.1 531.5 540.3 534.2 538.0 537.0 C535.7 539.8 533.7 543.0 532.5 546.0 C531.3 549.0 531.0 552.2 530.8 554.9 C530.6 557.6 530.4 559.8 531.3 562.3 C532.2 564.8 533.9 567.9 536.0 570.0 C538.1 572.1 540.4 572.9 544.0 575.0 C547.6 577.1 553.6 579.8 557.8 582.4 C562.0 585.0 567.5 589.4 569.4 590.8" fill="#fff" stroke="#2b2b2b" stroke-width="1.0" />
<path d="M584.2 538.5 C581.6 537.2 573.0 532.8 568.3 530.6 C563.5 528.4 559.4 525.5 555.7 525.3 C552.0 525.1 549.1 527.5 546.1 529.5 C543.1 531.5 540.3 534.2 538.0 537.0 C535.7 539.8 533.7 543.0 532.5 546.0 C531.3 549.0 531.0 552.2 530.8 554.9 C530.6 557.6 530.4 559.8 531.3 562.3 C532.2 564.8 533.9 567.9 536.0 570.0 C538.1 572.1 540.4 572.9 544.0 575.0 C547.6 577.1 553.6 579.8 557.8 582.4 C562.0 585.0 567.5 589.4 569.4 590.8 L590 590 L600 540 Z" fill="#fff" stroke="none"/>
<path d="M584.2 538.5 C581.6 537.2 573.0 532.8 568.3 530.6 C563.5 528.4 559.4 525.5 555.7 525.3 C552.0 525.1 549.1 527.5 546.1 529.5 C543.1 531.5 540.3 534.2 538.0 537.0 C535.7 539.8 533.7 543.0 532.5 546.0 C531.3 549.0 531.0 552.2 530.8 554.9 C530.6 557.6 530.4 559.8 531.3 562.3 C532.2 564.8 533.9 567.9 536.0 570.0 C538.1 572.1 540.4 572.9 544.0 575.0 C547.6 577.1 553.6 579.8 557.8 582.4 C562.0 585.0 567.5 589.4 569.4 590.8" fill="none" stroke="#2b2b2b" stroke-width="1.0" />
<path d="M546.1 529.5 L556.0 532.0" fill="none" stroke="#2b2b2b" stroke-width="0.8" />
<path d="M539.0 536.0 L549.0 538.5" fill="none" stroke="#2b2b2b" stroke-width="0.8" />
<path d="M533.5 545.0 L543.0 547.5" fill="none" stroke="#2b2b2b" stroke-width="0.8" />
<path d="M531.0 554.0 L540.5 556.5" fill="none" stroke="#2b2b2b" stroke-width="0.8" />
<path d="M532.0 563.0 L541.0 565.5" fill="none" stroke="#2b2b2b" stroke-width="0.8" />
<path d="M537.0 571.0 L545.0 573.0" fill="none" stroke="#2b2b2b" stroke-width="0.8" />
<path d="M568.3 530.6 C566.2 530.8 559.2 530.7 556.0 532.0 C552.8 533.3 551.2 535.9 549.0 538.5 C546.8 541.1 544.4 544.5 543.0 547.5 C541.6 550.5 540.8 553.5 540.5 556.5 C540.2 559.5 540.2 562.8 541.0 565.5 C541.8 568.2 542.2 570.2 545.0 573.0 C547.8 575.8 555.7 580.8 557.8 582.4" fill="none" stroke="#2b2b2b" stroke-width="0.8" />
<ellipse cx="577.5" cy="564.5" rx="19.2" ry="27.0" transform="rotate(20 577.5 564.5)" fill="#fff" stroke="#2b2b2b" stroke-width="1.0"/>
<ellipse cx="578.1" cy="564.8" rx="16.8" ry="24.5" transform="rotate(20 578.1 564.8)" fill="none" stroke="#2b2b2b" stroke-width="0.8"/>
<ellipse cx="578.7" cy="564.7" rx="13.5" ry="20.0" transform="rotate(20 578.7 564.7)" fill="none" stroke="#2b2b2b" stroke-width="0.8"/>
<ellipse cx="579.0" cy="563.5" rx="3.2" ry="5.3" transform="rotate(20 579.0 563.5)" fill="none" stroke="#2b2b2b" stroke-width="0.9"/>
<ellipse cx="579.0" cy="563.5" rx="5.5" ry="7.5" transform="rotate(20 579.0 563.5)" fill="none" stroke="#666" stroke-width="0.6"/>
<path d="M586.5 568.3 A1.3 1.3 0 1 0 586.7 570.1" fill="none" stroke="#333" stroke-width="0.7"/>
<path d="M581.2 572.8 A1.3 1.3 0 1 0 581.4 574.6" fill="none" stroke="#333" stroke-width="0.7"/>
<path d="M575.3 572.4 A1.3 1.3 0 1 0 575.5 574.2" fill="none" stroke="#333" stroke-width="0.7"/>
<path d="M571.6 567.4 A1.3 1.3 0 1 0 571.8 569.2" fill="none" stroke="#333" stroke-width="0.7"/>
<path d="M571.8 560.1 A1.3 1.3 0 1 0 572.0 561.9" fill="none" stroke="#333" stroke-width="0.7"/>
<path d="M575.9 553.9 A1.3 1.3 0 1 0 576.1 555.7" fill="none" stroke="#333" stroke-width="0.7"/>
<path d="M581.9 551.8 A1.3 1.3 0 1 0 582.1 553.6" fill="none" stroke="#333" stroke-width="0.7"/>
<path d="M587.0 554.6 A1.3 1.3 0 1 0 587.2 556.4" fill="none" stroke="#333" stroke-width="0.7"/>
<path d="M588.8 561.2 A1.3 1.3 0 1 0 589.0 563.0" fill="none" stroke="#333" stroke-width="0.7"/>
<line x1="572.7" y1="510.0" x2="572.7" y2="531.0" stroke="#383838" stroke-width="0.8"/>
<text x="555.3" y="507.0" class="lb">49065A</text>
<line x1="651.6" y1="130.3" x2="658.2" y2="174.0" stroke="#383838" stroke-width="1.0"/>
<line x1="655.9" y1="130.3" x2="662.6" y2="174.0" stroke="#383838" stroke-width="1.0"/>
<path d="M670.9 105.3 L671.0 106.2 L670.9 107.1 L670.6 108.1 L670.1 109.1 L669.4 110.1 L668.5 111.2 L667.3 112.2 L666.0 113.3 L664.5 114.3 L662.9 115.3 L661.1 116.2 L659.2 117.1 L657.3 118.0 L655.2 118.7 L653.1 119.4 L651.0 120.0 L648.9 120.5 L646.8 121.0 L644.7 121.3 L642.7 121.5 L640.8 121.5 L639.0 121.5 L637.3 121.4 L635.8 121.2 L634.4 120.8 L633.3 120.4 L632.3 119.8 L631.5 119.2 L630.9 118.5 L630.5 117.7 L630.5 126.2 L630.5 126.2 L630.9 127.0 L631.5 127.7 L632.3 128.3 L633.3 128.9 L634.4 129.3 L635.8 129.7 L637.3 129.9 L639.0 130.0 L640.8 130.0 L642.7 130.0 L644.7 129.8 L646.8 129.5 L648.9 129.0 L651.0 128.5 L653.1 127.9 L655.2 127.2 L657.3 126.5 L659.2 125.6 L661.1 124.7 L662.9 123.8 L664.5 122.8 L666.0 121.8 L667.3 120.7 L668.5 119.7 L669.4 118.6 L670.1 117.6 L670.6 116.6 L670.9 115.6 L671.0 114.7 L670.9 113.8 Z" fill="#fff" stroke="#222" stroke-width="1"/>
<line x1="671.0" y1="107.4" x2="671.2" y2="113.7" stroke="#3a3a3a" stroke-width="0.7"/>
<line x1="670.9" y1="108.3" x2="671.1" y2="114.6" stroke="#3a3a3a" stroke-width="0.7"/>
<line x1="670.6" y1="109.3" x2="670.8" y2="115.6" stroke="#3a3a3a" stroke-width="0.7"/>
<line x1="670.1" y1="110.3" x2="670.3" y2="116.6" stroke="#3a3a3a" stroke-width="0.7"/>
<line x1="669.4" y1="111.3" x2="669.6" y2="117.6" stroke="#3a3a3a" stroke-width="0.7"/>
<line x1="668.5" y1="112.4" x2="668.7" y2="118.7" stroke="#3a3a3a" stroke-width="0.7"/>
<line x1="667.3" y1="113.4" x2="667.5" y2="119.7" stroke="#3a3a3a" stroke-width="0.7"/>
<line x1="666.0" y1="114.5" x2="666.2" y2="120.8" stroke="#3a3a3a" stroke-width="0.7"/>
<line x1="664.5" y1="115.5" x2="664.7" y2="121.8" stroke="#3a3a3a" stroke-width="0.7"/>
<line x1="662.9" y1="116.5" x2="663.1" y2="122.8" stroke="#3a3a3a" stroke-width="0.7"/>
<line x1="661.1" y1="117.4" x2="661.3" y2="123.7" stroke="#3a3a3a" stroke-width="0.7"/>
<line x1="659.2" y1="118.3" x2="659.4" y2="124.6" stroke="#3a3a3a" stroke-width="0.7"/>
<line x1="657.3" y1="119.2" x2="657.5" y2="125.5" stroke="#3a3a3a" stroke-width="0.7"/>
<line x1="655.2" y1="119.9" x2="655.4" y2="126.2" stroke="#3a3a3a" stroke-width="0.7"/>
<line x1="653.1" y1="120.6" x2="653.3" y2="126.9" stroke="#3a3a3a" stroke-width="0.7"/>
<line x1="651.0" y1="121.2" x2="651.2" y2="127.5" stroke="#3a3a3a" stroke-width="0.7"/>
<line x1="648.9" y1="121.7" x2="649.1" y2="128.0" stroke="#3a3a3a" stroke-width="0.7"/>
<line x1="646.8" y1="122.2" x2="647.0" y2="128.5" stroke="#3a3a3a" stroke-width="0.7"/>
<line x1="644.7" y1="122.5" x2="644.9" y2="128.8" stroke="#3a3a3a" stroke-width="0.7"/>
<line x1="642.7" y1="122.7" x2="642.9" y2="129.0" stroke="#3a3a3a" stroke-width="0.7"/>
<line x1="640.8" y1="122.7" x2="641.0" y2="129.0" stroke="#3a3a3a" stroke-width="0.7"/>
<line x1="639.0" y1="122.7" x2="639.2" y2="129.0" stroke="#3a3a3a" stroke-width="0.7"/>
<line x1="637.3" y1="122.6" x2="637.5" y2="128.9" stroke="#3a3a3a" stroke-width="0.7"/>
<line x1="635.8" y1="122.4" x2="636.0" y2="128.7" stroke="#3a3a3a" stroke-width="0.7"/>
<line x1="634.4" y1="122.0" x2="634.6" y2="128.3" stroke="#3a3a3a" stroke-width="0.7"/>
<line x1="633.3" y1="121.6" x2="633.5" y2="127.9" stroke="#3a3a3a" stroke-width="0.7"/>
<line x1="632.3" y1="121.0" x2="632.5" y2="127.3" stroke="#3a3a3a" stroke-width="0.7"/>
<line x1="631.5" y1="120.4" x2="631.7" y2="126.7" stroke="#3a3a3a" stroke-width="0.7"/>
<line x1="630.9" y1="119.7" x2="631.1" y2="126.0" stroke="#3a3a3a" stroke-width="0.7"/>
<path d="M670.9 113.8 L671.0 114.7 L670.9 115.6 L670.6 116.6 L670.1 117.6 L669.4 118.6 L668.5 119.7 L667.3 120.7 L666.0 121.8 L664.5 122.8 L662.9 123.8 L661.1 124.7 L659.2 125.6 L657.3 126.5 L655.2 127.2 L653.1 127.9 L651.0 128.5 L648.9 129.0 L646.8 129.5 L644.7 129.8 L642.7 130.0 L640.8 130.0 L639.0 130.0 L637.3 129.9 L635.8 129.7 L634.4 129.3 L633.3 128.9 L632.3 128.3 L631.5 127.7 L630.9 127.0 L630.5 126.2" fill="none" stroke="#222" stroke-width="1.1" />
<ellipse cx="650.7" cy="111.5" rx="21.1" ry="8.3" transform="rotate(-17 650.7 111.5)" fill="#fff" stroke="#222" stroke-width="1.1"/>
<line x1="671.7" y1="112.8" x2="695.6" y2="112.8" stroke="#383838" stroke-width="0.9"/>
<text x="696.0" y="116.1" class="lb">52005</text>
<ellipse cx="657.5" cy="150.6" rx="15.5" ry="7.4" transform="rotate(-9 657.5 150.6)" fill="#fff" stroke="#2b2b2b" stroke-width="1.0"/>
<path d="M672.8 149.8 L672.8 150.9 L672.4 152.2 L671.7 153.4 L670.6 154.5 L669.1 155.7 L667.4 156.7 L665.5 157.6 L663.3 158.4 L661.0 159.0 L658.7 159.5 L656.2 159.8 L653.9 159.9 L651.6 159.8 L649.4 159.5 L647.5 159.1 L645.8 158.5 L644.4 157.7 L643.3 156.8 L642.6 155.7 L642.2 154.6" fill="none" stroke="#2b2b2b" stroke-width="0.85" />
<path d="M647.3 153.8 L646.6 153.0 L646.3 152.1 L646.4 151.2 L647.0 150.2 L647.8 149.3 L649.1 148.4 L650.6 147.5 L652.4 146.8 L654.4 146.2 L656.6 145.7 L658.7 145.4 L660.9 145.2 L662.9 145.3 L664.8 145.5 L666.4 145.9 L667.8 146.4 L668.8 147.1 L669.4 147.9 L669.7 148.8 L669.5 149.7 L669.0 150.7 L668.0 151.6 L666.7 152.5 L665.2 153.4 L663.3 154.1 L661.3 154.7 L659.2 155.2 L657.0 155.5 L654.9 155.6 L652.8 155.5" fill="none" stroke="#2b2b2b" stroke-width="0.85" />
<line x1="652.9" y1="146.0" x2="654.9" y2="154.0" stroke="#383838" stroke-width="1.0"/>
<line x1="657.2" y1="146.0" x2="659.2" y2="153.5" stroke="#383838" stroke-width="1.0"/>
<path d="M672.3 150.8 L671.7 151.8 L670.8 152.7 L669.8 153.6 L668.6 154.4 L667.2 155.2 L665.7 155.9 L664.1 156.6 L662.3 157.1 L660.5 157.6 L658.7 157.9 L656.8 158.1 L654.9 158.3 L653.1 158.3 L651.3 158.2 L649.7 158.0 L648.1 157.7 L646.7 157.2 L645.5 156.7 L644.4 156.1 L643.5 155.4 L647.3 153.8 L648.0 154.2 L648.8 154.6 L649.7 155.0 L650.8 155.2 L651.9 155.4 L653.2 155.5 L654.5 155.6 L655.9 155.5 L657.3 155.4 L658.8 155.2 L660.2 155.0 L661.6 154.6 L662.9 154.3 L664.1 153.8 L665.3 153.3 L666.4 152.8 L667.3 152.2 L668.1 151.6 L668.7 151.0 L669.2 150.3 Z" fill="#fff" stroke="none"/>
<path d="M672.3 150.8 L671.7 151.8 L670.8 152.7 L669.8 153.6 L668.6 154.4 L667.2 155.2 L665.7 155.9 L664.1 156.6 L662.3 157.1 L660.5 157.6 L658.7 157.9 L656.8 158.1 L654.9 158.3 L653.1 158.3 L651.3 158.2 L649.7 158.0 L648.1 157.7 L646.7 157.2 L645.5 156.7 L644.4 156.1 L643.5 155.4" fill="none" stroke="#2b2b2b" stroke-width="1.0" />
<path d="M669.2 150.3 L668.7 151.0 L668.1 151.6 L667.3 152.2 L666.4 152.8 L665.3 153.3 L664.1 153.8 L662.9 154.3 L661.6 154.6 L660.2 155.0 L658.8 155.2 L657.3 155.4 L655.9 155.5 L654.5 155.6 L653.2 155.5 L651.9 155.4 L650.8 155.2 L649.7 155.0 L648.8 154.6 L648.0 154.2 L647.3 153.8" fill="none" stroke="#2b2b2b" stroke-width="0.85" />
<line x1="673.4" y1="147.0" x2="696.3" y2="147.0" stroke="#383838" stroke-width="0.9"/>
<text x="697.4" y="149.6" class="lb">11009</text>
<path d="M707.4 338.4 L707.3 339.1 L707.0 339.8 L706.5 340.5 L705.6 341.2 L704.6 341.9 L703.3 342.5 L701.9 343.1 L700.3 343.6 L698.6 344.0 L696.9 344.3 L695.2 344.4 L693.4 344.5 L691.8 344.5 L690.3 344.4 L688.9 344.1 L687.7 343.8 L686.7 343.3 L685.9 342.8 L685.4 342.2 L685.2 341.6 L686.4 351.5 L686.4 351.5 L686.6 352.1 L687.1 352.6 L687.8 353.1 L688.7 353.6 L689.9 353.9 L691.1 354.1 L692.6 354.3 L694.1 354.3 L695.7 354.2 L697.4 354.1 L699.0 353.8 L700.6 353.4 L702.0 353.0 L703.4 352.4 L704.6 351.8 L705.5 351.2 L706.3 350.5 L706.9 349.9 L707.2 349.2 L707.2 348.5 Z" fill="#fff" stroke="#2b2b2b" stroke-width="1.0"/>
<path d="M707.3 342.5 L707.3 343.2 L707.0 343.9 L706.4 344.5 L705.6 345.2 L704.6 345.9 L703.4 346.5 L702.0 347.0 L700.5 347.5 L698.9 347.9 L697.2 348.2 L695.5 348.3 L693.9 348.4 L692.3 348.4 L690.8 348.2 L689.5 348.0 L688.3 347.7 L687.3 347.2 L686.6 346.7 L686.1 346.1 L685.9 345.5" fill="none" stroke="#2b2b2b" stroke-width="0.85" />
<path d="M707.3 345.5 L707.3 346.2 L707.0 346.9 L706.4 347.5 L705.6 348.2 L704.6 348.9 L703.4 349.5 L702.0 350.0 L700.5 350.5 L698.9 350.9 L697.2 351.2 L695.5 351.3 L693.9 351.4 L692.3 351.4 L690.8 351.2 L689.5 351.0 L688.3 350.7 L687.3 350.2 L686.6 349.7 L686.1 349.1 L685.9 348.5" fill="none" stroke="#2b2b2b" stroke-width="0.85" />
<path d="M709.0 334.7 L709.0 335.3 L708.7 336.0 L708.3 336.6 L707.6 337.2 L706.7 337.9 L705.7 338.5 L704.5 339.0 L703.2 339.6 L701.7 340.0 L700.2 340.4 L698.6 340.8 L696.9 341.1 L695.3 341.2 L693.6 341.4 L692.0 341.4 L690.5 341.3 L689.1 341.2 L687.8 341.0 L686.6 340.7 L685.6 340.3 L684.8 339.9 L684.2 339.4 L683.8 338.9 L683.6 338.3 L683.6 341.8 L683.6 341.8 L683.8 342.4 L684.2 342.9 L684.8 343.4 L685.6 343.8 L686.6 344.2 L687.8 344.5 L689.1 344.7 L690.5 344.8 L692.0 344.9 L693.6 344.9 L695.3 344.7 L696.9 344.6 L698.6 344.3 L700.2 343.9 L701.7 343.5 L703.2 343.1 L704.5 342.5 L705.7 342.0 L706.7 341.4 L707.6 340.7 L708.3 340.1 L708.7 339.5 L709.0 338.8 L709.0 338.2 Z" fill="#fff" stroke="#2b2b2b" stroke-width="1.0"/>
<ellipse cx="696.3" cy="336.5" rx="12.8" ry="4.6" transform="rotate(-8 696.3 336.5)" fill="#fff" stroke="#2b2b2b" stroke-width="1.0"/>
<path d="M654.7 186 L686.8 337 L704.2 334.6 L675.6 186 Z" fill="#fff" stroke="none"/>
<line x1="654.7" y1="186.0" x2="686.8" y2="337.0" stroke="#333" stroke-width="1.05"/>
<line x1="675.6" y1="186.0" x2="704.2" y2="334.6" stroke="#333" stroke-width="1.05"/>
<path d="M680.8 166.6 L680.8 167.5 L680.5 168.4 L679.9 169.4 L679.0 170.3 L677.8 171.2 L676.4 172.1 L674.7 173.0 L672.8 173.8 L670.8 174.6 L668.6 175.3 L666.3 175.8 L663.9 176.3 L661.6 176.7 L659.2 176.9 L657.0 177.0 L654.8 177.0 L652.7 176.9 L650.9 176.6 L649.2 176.3 L647.8 175.8 L646.6 175.2 L645.7 174.6 L645.1 173.8 L644.8 173.0 L645.9 185.8 L645.9 185.8 L646.2 186.6 L646.7 187.3 L647.6 188.0 L648.7 188.5 L650.1 189.0 L651.7 189.3 L653.5 189.6 L655.4 189.7 L657.5 189.7 L659.7 189.6 L661.9 189.3 L664.2 189.0 L666.4 188.6 L668.6 188.0 L670.7 187.4 L672.7 186.7 L674.5 185.9 L676.1 185.0 L677.4 184.2 L678.6 183.3 L679.4 182.4 L680.0 181.5 L680.3 180.6 L680.3 179.8 Z" fill="#fff" stroke="#2b2b2b" stroke-width="1.0"/>
<path d="M680.8 170.1 L680.8 171.0 L680.5 171.9 L679.9 172.9 L679.0 173.8 L677.8 174.7 L676.4 175.6 L674.7 176.5 L672.8 177.3 L670.8 178.1 L668.6 178.8 L666.3 179.3 L663.9 179.8 L661.6 180.2 L659.2 180.4 L657.0 180.5 L654.8 180.5 L652.7 180.4 L650.9 180.1 L649.2 179.8 L647.8 179.3 L646.6 178.7 L645.7 178.1 L645.1 177.3 L644.8 176.5" fill="none" stroke="#2b2b2b" stroke-width="0.9" />
<path d="M680.6 173.2 L680.6 174.0 L680.3 174.9 L679.7 175.9 L678.8 176.8 L677.7 177.7 L676.2 178.6 L674.6 179.5 L672.7 180.3 L670.7 181.0 L668.6 181.7 L666.3 182.2 L664.0 182.7 L661.7 183.1 L659.4 183.3 L657.2 183.4 L655.0 183.4 L653.0 183.3 L651.2 183.0 L649.5 182.7 L648.1 182.2 L647.0 181.6 L646.1 181.0 L645.5 180.2 L645.2 179.4" fill="none" stroke="#2b2b2b" stroke-width="1.0" />
<path d="M680.5 176.2 L680.5 177.1 L680.2 177.9 L679.6 178.9 L678.7 179.8 L677.6 180.7 L676.2 181.6 L674.6 182.4 L672.7 183.2 L670.7 183.9 L668.6 184.6 L666.4 185.1 L664.1 185.6 L661.8 186.0 L659.5 186.2 L657.3 186.3 L655.2 186.3 L653.2 186.2 L651.4 185.9 L649.8 185.6 L648.4 185.1 L647.2 184.6 L646.4 183.9 L645.8 183.2 L645.5 182.4" fill="none" stroke="#2b2b2b" stroke-width="1.0" />
<ellipse cx="662.8" cy="169.8" rx="18.3" ry="6.6" transform="rotate(-10 662.8 169.8)" fill="#fff" stroke="#2b2b2b" stroke-width="1.0"/>
<path d="M649.3 172.5 L649.8 171.6 L650.7 170.6 L652.1 169.7 L653.8 168.8 L655.8 168.0 L658.1 167.3 L660.5 166.7 L662.9 166.3 L665.4 166.0 L667.8 165.9 L669.9 166.0 L671.8 166.2 L673.4 166.6 L674.7 167.2 L675.5 167.9 L675.8 168.7 L675.7 169.6 L675.1 170.5 L674.1 171.5 L672.7 172.4 L671.0 173.3 L668.9 174.1 L666.6 174.8 L664.2 175.4 L661.7 175.8 L659.3 176.0 L657.0 176.1 L654.8 176.0 L652.9 175.7 L651.4 175.3" fill="none" stroke="#2b2b2b" stroke-width="0.9" />
<line x1="659.5" y1="165.5" x2="661.4" y2="174.5" stroke="#383838" stroke-width="1.0"/>
<line x1="663.8" y1="165.0" x2="665.6" y2="174.5" stroke="#383838" stroke-width="1.0"/>
<line x1="681.0" y1="173.4" x2="703.2" y2="173.4" stroke="#383838" stroke-width="0.9"/>
<text x="704.0" y="176.7" class="lb">59231</text>
<path d="M683.6 270.3 L704 258.7 A2.5 4.3 -30 0 1 708.3 266 L688 277.6 Z" fill="#fff" stroke="#2b2b2b" stroke-width="1.0"/>
<ellipse cx="706.1" cy="262.4" rx="2.4" ry="4.4" transform="rotate(-30 706.1 262.4)" fill="#fff" stroke="#2b2b2b" stroke-width="1.0"/>
<ellipse cx="685.8" cy="273.8" rx="2.6" ry="4.2" transform="rotate(-30 685.8 273.8)" fill="#fff" stroke="#2b2b2b" stroke-width="0.8"/>
<path d="M674.2 273.3 L683 270.5 M676.3 278.3 L686.5 281.3 L688 277.6 M674.2 273.3 L676.3 278.3" fill="none" stroke="#2b2b2b" stroke-width="0.8" />
<path d="M686.5 281.3 L690 287 M691 280 L694 285" fill="none" stroke="#2b2b2b" stroke-width="0.6" />
<g transform="translate(647.5 272.5) rotate(32)">
<path d="M3 -2.4 L18 -2.4 L18 2.4 L3 2.4 Z" fill="#fff" stroke="#2b2b2b" stroke-width="0.8" />
<line x1="5.0" y1="-2.4" x2="6.0" y2="2.4" stroke="#444" stroke-width="0.6"/>
<line x1="7.2" y1="-2.4" x2="8.2" y2="2.4" stroke="#444" stroke-width="0.6"/>
<line x1="9.4" y1="-2.4" x2="10.4" y2="2.4" stroke="#444" stroke-width="0.6"/>
<line x1="11.6" y1="-2.4" x2="12.6" y2="2.4" stroke="#444" stroke-width="0.6"/>
<line x1="13.8" y1="-2.4" x2="14.8" y2="2.4" stroke="#444" stroke-width="0.6"/>
<line x1="16.0" y1="-2.4" x2="17.0" y2="2.4" stroke="#444" stroke-width="0.6"/>
<path d="M-1 -5 L3 -5 L3 5 L-1 5 Z" fill="#fff" stroke="#2b2b2b" stroke-width="0.8" />
<path d="M-4.5 -5.5 L-1 -5.5 L-1 5.5 L-4.5 5.5 Z" fill="#fff" stroke="#2b2b2b" stroke-width="0.8" />
<ellipse cx="-4.5" cy="0.0" rx="2.2" ry="5.5" transform="rotate(0 -4.5 0.0)" fill="#fff" stroke="#2b2b2b" stroke-width="0.8"/>
<line x1="-2.8" y1="-3.0" x2="-2.8" y2="3.0" stroke="#555" stroke-width="0.5"/>
</g>
<line x1="665.4" y1="281.3" x2="720.0" y2="312.8" stroke="#383838" stroke-width="0.8"/>
<line x1="649.0" y1="279.0" x2="649.0" y2="301.5" stroke="#383838" stroke-width="0.8"/>
<text x="637.5" y="311.0" class="lb">130A</text>
<path d="M724.0 326.4 L723.2 308.9 L730.5 295.9 L749.4 285.7 L758.1 286.4 L761.0 291.5 L760.3 308.9 L750.9 311.1 L750.9 301.7 L733.4 308.9 L733.6 322.5 Z" fill="#fff" stroke="#2b2b2b" stroke-width="1.0" />
<path d="M730.5 295.9 L733.4 300.5 L754 290.5 L758.1 286.4 M754 290.5 L757 296 L757 307" fill="none" stroke="#2b2b2b" stroke-width="0.8" />
<path d="M733.4 300.5 L733.4 308.9" fill="none" stroke="#2b2b2b" stroke-width="0.8" />
<line x1="751.5" y1="289.0" x2="751.8" y2="294.5" stroke="#383838" stroke-width="0.6"/>
<line x1="753.2" y1="288.3" x2="753.5" y2="293.8" stroke="#383838" stroke-width="0.6"/>
<ellipse cx="729.8" cy="319.1" rx="2.2" ry="3.0" transform="rotate(20 729.8 319.1)" fill="none" stroke="#2b2b2b" stroke-width="0.8"/>
<ellipse cx="755.9" cy="303.1" rx="2.2" ry="3.0" transform="rotate(20 755.9 303.1)" fill="none" stroke="#2b2b2b" stroke-width="0.8"/>
<line x1="740.0" y1="266.8" x2="740.0" y2="290.5" stroke="#383838" stroke-width="0.8"/>
<text x="723.2" y="264.5" class="lb">11050A</text>
<path d="M775.5 297.3 L781.4 295.9 L801.7 307.5 L800.2 313.3 L796.0 314.0 L797.3 329.3 L784.3 332.9 L782.8 326.4 L774.1 329.3 L772.6 338.0 L762.5 346.7 L758.1 345.2 L757.4 330.7 L762.5 327.8 Z" fill="#fff" stroke="#2b2b2b" stroke-width="1.0" />
<path d="M762.5 327.8 L766 332 L774 329.3 M775.5 297.3 L779 301 L801.7 307.5" fill="none" stroke="#2b2b2b" stroke-width="0.8" />
<path d="M778.5 300.5 L765 331" fill="none" stroke="#2b2b2b" stroke-width="0.8" />
<rect x="762.8" y="336.2" width="8" height="8" fill="#fff" stroke="#333" stroke-width="0.8" transform="rotate(-15 766.8 340.2)"/>
<rect x="764.8" y="338.2" width="4" height="4" fill="none" stroke="#444" stroke-width="0.6" transform="rotate(-15 766.8 340.2)"/>
<rect x="789" y="321.6" width="8" height="8" fill="#fff" stroke="#333" stroke-width="0.8" transform="rotate(-15 793 325.6)"/>
<rect x="791" y="323.6" width="4" height="4" fill="none" stroke="#444" stroke-width="0.6" transform="rotate(-15 793 325.6)"/>
<ellipse cx="781.0" cy="304.5" rx="1.5" ry="2.5" transform="rotate(0 781.0 304.5)" fill="none" stroke="#2b2b2b" stroke-width="0.8"/>
<path d="M785 318 Q789 312 794 315 L794 319" fill="none" stroke="#2b2b2b" stroke-width="0.8" />
<line x1="780.6" y1="273.3" x2="780.6" y2="296.0" stroke="#383838" stroke-width="0.8"/>
<text x="767.6" y="270.5" class="lb">11050</text>
<ellipse cx="701.9" cy="364.6" rx="8.8" ry="4.1" transform="rotate(-8 701.9 364.6)" fill="none" stroke="#111" stroke-width="1.7"/>
<line x1="711.0" y1="364.0" x2="733.5" y2="364.0" stroke="#383838" stroke-width="0.9"/>
<text x="734.3" y="367.0" class="lb">670A</text>
<path d="M717.2 387.4 L717.1 388.0 L716.8 388.7 L716.2 389.4 L715.3 390.1 L714.2 390.8 L712.8 391.4 L711.3 392.0 L709.7 392.4 L707.9 392.9 L706.1 393.2 L704.2 393.4 L702.4 393.5 L700.7 393.5 L699.1 393.3 L697.7 393.1 L696.4 392.8 L695.4 392.4 L694.6 391.8 L694.1 391.3 L693.8 390.6 L694.6 402.5 L694.6 402.5 L694.8 403.1 L695.3 403.7 L696.0 404.2 L697.0 404.6 L698.2 404.9 L699.5 405.1 L701.1 405.2 L702.7 405.2 L704.3 405.2 L706.1 405.0 L707.8 404.7 L709.4 404.3 L710.9 403.8 L712.4 403.3 L713.6 402.7 L714.6 402.1 L715.5 401.4 L716.0 400.8 L716.3 400.1 L716.4 399.5 Z" fill="#fff" stroke="#2b2b2b" stroke-width="1.0"/>
<path d="M716.9 391.4 L716.8 392.1 L716.5 392.7 L715.9 393.4 L715.0 394.1 L714.0 394.7 L712.7 395.3 L711.2 395.9 L709.6 396.4 L707.8 396.8 L706.1 397.1 L704.3 397.3 L702.5 397.4 L700.8 397.3 L699.3 397.2 L697.9 397.0 L696.6 396.7 L695.6 396.3 L694.8 395.8 L694.3 395.2 L694.1 394.6" fill="none" stroke="#2b2b2b" stroke-width="0.7" />
<path d="M716.9 393.9 L716.8 394.6 L716.5 395.2 L715.9 395.9 L715.0 396.6 L714.0 397.2 L712.7 397.8 L711.2 398.4 L709.6 398.9 L707.8 399.3 L706.1 399.6 L704.3 399.8 L702.5 399.9 L700.8 399.8 L699.3 399.7 L697.9 399.5 L696.6 399.2 L695.6 398.8 L694.8 398.3 L694.3 397.7 L694.1 397.1" fill="none" stroke="#2b2b2b" stroke-width="0.7" />
<path d="M716.9 396.4 L716.8 397.1 L716.5 397.7 L715.9 398.4 L715.0 399.1 L714.0 399.7 L712.7 400.3 L711.2 400.9 L709.6 401.4 L707.8 401.8 L706.1 402.1 L704.3 402.3 L702.5 402.4 L700.8 402.3 L699.3 402.2 L697.9 402.0 L696.6 401.7 L695.6 401.3 L694.8 400.8 L694.3 400.2 L694.1 399.6" fill="none" stroke="#2b2b2b" stroke-width="0.7" />
<path d="M722.9 381.6 L722.9 382.6 L722.6 383.6 L722.0 384.6 L721.1 385.6 L720.0 386.6 L718.6 387.6 L716.9 388.5 L715.1 389.3 L713.1 390.0 L711.0 390.6 L708.8 391.1 L706.6 391.5 L704.3 391.8 L702.0 391.9 L699.8 391.9 L697.7 391.7 L695.7 391.5 L693.9 391.1 L692.3 390.5 L690.9 389.9 L689.8 389.1 L688.9 388.3 L688.4 387.4 L688.1 386.4 L688.1 389.9 L688.1 389.9 L688.4 390.9 L688.9 391.8 L689.8 392.6 L690.9 393.4 L692.3 394.0 L693.9 394.6 L695.7 395.0 L697.7 395.2 L699.8 395.4 L702.0 395.4 L704.3 395.3 L706.6 395.0 L708.8 394.6 L711.0 394.1 L713.1 393.5 L715.1 392.8 L716.9 392.0 L718.6 391.1 L720.0 390.1 L721.1 389.1 L722.0 388.1 L722.6 387.1 L722.9 386.1 L722.9 385.1 Z" fill="#fff" stroke="#2b2b2b" stroke-width="1.0"/>
<ellipse cx="705.5" cy="384.0" rx="17.6" ry="7.6" transform="rotate(-8 705.5 384.0)" fill="#fff" stroke="#2b2b2b" stroke-width="1.0"/>
<ellipse cx="706.0" cy="383.2" rx="10.9" ry="4.6" transform="rotate(-8 706.0 383.2)" fill="none" stroke="#2b2b2b" stroke-width="0.8"/>
<ellipse cx="705.8" cy="383.6" rx="13.5" ry="5.9" transform="rotate(-8 705.8 383.6)" fill="none" stroke="#555" stroke-width="0.6"/>
<line x1="723.2" y1="381.8" x2="745.0" y2="381.8" stroke="#383838" stroke-width="0.9"/>
<text x="746.2" y="384.8" class="lb">41077</text>
<ellipse cx="711.6" cy="413.8" rx="11.3" ry="5.6" transform="rotate(-8 711.6 413.8)" fill="none" stroke="#111" stroke-width="1.7"/>
<line x1="723.0" y1="411.7" x2="746.0" y2="411.7" stroke="#383838" stroke-width="0.9"/>
<text x="746.9" y="414.6" class="lb">670B</text>
<path d="M708 508 L722 522.5 L732.6 548.9 L704 534.5 Z" fill="#fff" stroke="none"/>
<path d="M708 508 L716.7 513 L722 522.5" fill="none" stroke="#2b2b2b" stroke-width="1.0" />
<path d="M704 534.5 L732.6 548.9" fill="none" stroke="#2b2b2b" stroke-width="1.0" />
<line x1="711.0" y1="511.0" x2="708.0" y2="518.5" stroke="#666" stroke-width="0.5"/>
<line x1="712.5" y1="511.8" x2="709.5" y2="519.4" stroke="#666" stroke-width="0.5"/>
<line x1="714.0" y1="512.6" x2="711.0" y2="520.3" stroke="#666" stroke-width="0.5"/>
<line x1="715.5" y1="513.4" x2="712.5" y2="521.2" stroke="#666" stroke-width="0.5"/>
<line x1="717.0" y1="514.2" x2="714.0" y2="522.1" stroke="#666" stroke-width="0.5"/>
<line x1="718.5" y1="515.0" x2="715.5" y2="523.0" stroke="#666" stroke-width="0.5"/>
<ellipse cx="702.3" cy="521.3" rx="7.0" ry="13.8" transform="rotate(30 702.3 521.3)" fill="#fff" stroke="#2b2b2b" stroke-width="1.0"/>
<path d="M711.0 513.9 L711.0 515.6 L710.8 517.5 L710.3 519.6 L709.4 521.8 L708.3 523.9 L707.1 525.9 L705.6 527.7 L704.1 529.3 L702.6 530.5 L701.1 531.3 L699.7 531.7 L698.5 531.6 L697.5 531.1 L696.7 530.2 L696.3 528.9 L696.2 527.3" fill="none" stroke="#2b2b2b" stroke-width="0.8" />
<path d="M703.7 450.7 L724.1 529.9 Q727.3 533 741 535.7 L753.7 523.6 L746.3 526.7 L731.5 444 Z" fill="#fff" stroke="none"/>
<path d="M703.7 450.7 L724.1 529.9 Q728 534.5 741 535.7" fill="none" stroke="#2b2b2b" stroke-width="1.0" />
<path d="M743.2 532 L744.2 535.2" fill="none" stroke="#2b2b2b" stroke-width="0.7" />
<path d="M731.5 444 L746.3 526.7 L753.7 523.6" fill="none" stroke="#2b2b2b" stroke-width="1.0" />
<path d="M731.8 428.9 L731.9 430.0 L731.7 431.1 L731.2 432.3 L730.5 433.5 L729.5 434.7 L728.3 435.9 L726.8 436.9 L725.1 438.0 L723.3 438.9 L721.3 439.7 L719.3 440.4 L717.1 441.0 L714.9 441.4 L712.8 441.7 L710.6 441.8 L708.6 441.8 L706.6 441.6 L704.8 441.3 L703.2 440.8 L701.8 440.2 L700.6 439.4 L699.7 438.5 L699.0 437.6 L698.6 436.5 L701.0 449.1 L701.0 449.1 L701.3 450.1 L701.9 450.9 L702.8 451.7 L703.8 452.3 L705.1 452.9 L706.6 453.3 L708.2 453.6 L709.9 453.7 L711.8 453.8 L713.7 453.6 L715.6 453.4 L717.6 453.0 L719.5 452.5 L721.4 451.9 L723.2 451.1 L724.8 450.3 L726.3 449.4 L727.6 448.4 L728.8 447.4 L729.7 446.4 L730.3 445.3 L730.7 444.3 L730.9 443.2 L730.8 442.3 Z" fill="#fff" stroke="#2b2b2b" stroke-width="1.0"/>
<path d="M732.0 433.4 L732.1 434.5 L731.9 435.6 L731.4 436.8 L730.7 437.9 L729.7 439.1 L728.4 440.2 L727.0 441.3 L725.3 442.3 L723.5 443.2 L721.5 444.0 L719.4 444.7 L717.3 445.3 L715.1 445.7 L712.9 446.0 L710.8 446.1 L708.7 446.1 L706.8 445.9 L705.0 445.6 L703.4 445.2 L702.0 444.6 L700.8 443.8 L699.9 443.0 L699.2 442.0 L698.8 441.0" fill="none" stroke="#2b2b2b" stroke-width="1.0" />
<path d="M731.5 438.0 L731.6 439.1 L731.4 440.2 L731.0 441.3 L730.3 442.4 L729.3 443.5 L728.1 444.6 L726.7 445.7 L725.1 446.6 L723.3 447.5 L721.4 448.3 L719.5 448.9 L717.4 449.5 L715.3 449.9 L713.2 450.2 L711.2 450.3 L709.2 450.3 L707.4 450.1 L705.6 449.8 L704.1 449.4 L702.7 448.8 L701.6 448.1 L700.7 447.3 L700.1 446.4 L699.7 445.4" fill="none" stroke="#2b2b2b" stroke-width="1.0" />
<ellipse cx="715.2" cy="432.7" rx="17.0" ry="8.5" transform="rotate(-13 715.2 432.7)" fill="#fff" stroke="#2b2b2b" stroke-width="1.0"/>
<ellipse cx="716.0" cy="432.4" rx="13.5" ry="6.0" transform="rotate(-13 716.0 432.4)" fill="none" stroke="#2b2b2b" stroke-width="0.8"/>
<line x1="737.0" y1="466.5" x2="759.3" y2="466.5" stroke="#383838" stroke-width="0.9"/>
<text x="760.5" y="469.6" class="lb">59231A</text>
<path d="M721.8 555.7 C726.9 548.9 748.1 529.2 755.0 523.9 C761.9 518.6 760.8 522.8 763.0 523.9 C765.2 525.0 767.1 528.7 768.2 530.5 C769.3 532.3 774.0 528.5 769.6 534.5 C765.2 540.5 748.3 560.5 741.7 566.3 C735.1 572.0 732.7 569.2 729.8 569.0 C726.9 568.8 725.8 567.2 724.5 565.0 C723.2 562.8 716.7 562.6 721.8 555.7 Z" fill="#fff" stroke="#2b2b2b" stroke-width="1.0" />
<path d="M768.2 530.5 C769.1 531.6 770.2 532.5 769.6 534.5 C769.0 536.5 767.8 538.0 764.3 542.4 C760.8 546.8 752.2 557.0 748.4 561.0 C744.6 565.0 744.4 565.2 741.7 566.3 C739.0 567.4 734.4 567.8 732.4 567.6 C730.4 567.4 730.0 566.3 729.8 565.0 C729.6 563.7 730.0 561.7 731.1 559.7 C732.2 557.7 733.8 556.3 736.4 553.0 C739.0 549.7 743.7 543.5 747.0 539.8 C750.3 536.0 753.4 532.5 756.3 530.5 C759.2 528.5 762.3 527.9 764.3 527.9 C766.3 527.9 767.3 529.4 768.2 530.5 Z" fill="#fff" stroke="#2b2b2b" stroke-width="1.0" />
<ellipse cx="765.0" cy="534.5" rx="2.8" ry="3.3" transform="rotate(20 765.0 534.5)" fill="none" stroke="#2b2b2b" stroke-width="0.8"/>
<ellipse cx="735.8" cy="562.3" rx="3.8" ry="2.6" transform="rotate(-35 735.8 562.3)" fill="none" stroke="#2b2b2b" stroke-width="0.8"/>
<ellipse cx="751.7" cy="548.4" rx="7.2" ry="9.3" transform="rotate(30 751.7 548.4)" fill="none" stroke="#2b2b2b" stroke-width="0.8"/>
<line x1="741.7" y1="535.1" x2="741.7" y2="529.0" stroke="#383838" stroke-width="0"/>
<path d="M680.5 564.5 L687.8 568 L717.9 551" fill="none" stroke="#2b2b2b" stroke-width="0.8" />
<path d="M794.8 543.8 C795.7 544.8 796.8 546.9 796.1 549.1 C795.4 551.3 794.3 552.8 790.8 557.0 C787.3 561.2 778.7 570.8 774.9 574.3 C771.1 577.8 770.9 576.4 768.2 578.2 C765.6 580.0 761.0 584.5 759.0 584.9 C757.0 585.3 756.3 582.6 756.3 580.9 C756.3 579.2 756.4 579.1 759.0 574.9 C761.6 570.7 768.2 560.2 772.2 555.7 C776.2 551.2 779.7 549.8 782.8 547.7 C785.9 545.6 788.8 543.8 790.8 543.1 C792.8 542.5 793.9 542.8 794.8 543.8 Z" fill="#fff" stroke="#2b2b2b" stroke-width="1.0" />
<ellipse cx="791.5" cy="549.7" rx="2.5" ry="3.0" transform="rotate(20 791.5 549.7)" fill="none" stroke="#2b2b2b" stroke-width="0.8"/>
<ellipse cx="761.6" cy="577.6" rx="3.8" ry="2.6" transform="rotate(-35 761.6 577.6)" fill="none" stroke="#2b2b2b" stroke-width="0.8"/>
<ellipse cx="778.2" cy="563.0" rx="7.0" ry="9.0" transform="rotate(30 778.2 563.0)" fill="none" stroke="#2b2b2b" stroke-width="0.8"/>
<line x1="784.4" y1="525.9" x2="784.4" y2="547.5" stroke="#383838" stroke-width="0.8"/>
<text x="770.2" y="522.3" class="lb">11060</text>
<g transform="translate(634.6 483.8) rotate(26)">
<path d="M10 -6.3 L19 -6.3 L19 6.3 L10 6.3 Z" fill="#fff" stroke="#2b2b2b" stroke-width="0.85" />
<ellipse cx="10.0" cy="0.0" rx="2.4" ry="6.3" transform="rotate(0 10.0 0.0)" fill="#fff" stroke="#2b2b2b" stroke-width="0.85"/>
<path d="M8 -3.5 L10.5 -3.5 L10.5 3.5 L8 3.5 Z" fill="#fff" stroke="#2b2b2b" stroke-width="0.8" />
<path d="M0.5 -5 L8.5 -5 L8.5 5 L0.5 5 Z" fill="#fff" stroke="#2b2b2b" stroke-width="0.85" />
<path d="M0.5 -1.8 L8.5 -1.8 M0.5 2.2 L8.5 2.2" fill="none" stroke="#2b2b2b" stroke-width="0.6" />
<ellipse cx="0.5" cy="0.0" rx="1.8" ry="5.0" transform="rotate(0 0.5 0.0)" fill="#fff" stroke="#2b2b2b" stroke-width="0.85"/>
</g>
<path d="M647.3 496.3 L660.5 494.0 L661.0 507.0 L648.0 512.0 Z" fill="#fff" stroke="#2b2b2b" stroke-width="0.8" />
<ellipse cx="645.8" cy="504.8" rx="5.8" ry="7.5" transform="rotate(-20 645.8 504.8)" fill="#fff" stroke="#2b2b2b" stroke-width="0.8"/>
<ellipse cx="646.3" cy="505.6" rx="3.9" ry="5.3" transform="rotate(-20 646.3 505.6)" fill="none" stroke="#2b2b2b" stroke-width="0.6"/>
<path d="M651.2 485.5 L662.8 482.0 L673.6 488.6 L662.0 495.5 Z" fill="#fff" stroke="#2b2b2b" stroke-width="0.8" />
<path d="M651.2 485.5 L662.0 495.5 L661.3 509.4 L652.0 499.5 Z" fill="#fff" stroke="#2b2b2b" stroke-width="0.8" />
<path d="M662.0 495.5 L673.6 488.6 L673.5 502.5 L661.3 509.4 Z" fill="#fff" stroke="#2b2b2b" stroke-width="0.8" />
<line x1="656.0" y1="490.0" x2="656.0" y2="504.0" stroke="#555" stroke-width="0.6"/>
<ellipse cx="677.5" cy="504.0" rx="8.5" ry="12.0" transform="rotate(-25 677.5 504.0)" fill="#fff" stroke="#2b2b2b" stroke-width="1.0"/>
<ellipse cx="678.3" cy="503.6" rx="7.3" ry="10.5" transform="rotate(-25 678.3 503.6)" fill="none" stroke="#555" stroke-width="0.6"/>
<g transform="rotate(28 681 507)">
<path d="M673 500.5 L690 500.5 L690 513.5 L673 513.5 Z" fill="#fff" stroke="#2b2b2b" stroke-width="0.8" />
<line x1="674.5" y1="500.5" x2="675.5" y2="513.5" stroke="#444" stroke-width="0.6"/>
<line x1="676.4" y1="500.5" x2="677.4" y2="513.5" stroke="#444" stroke-width="0.6"/>
<line x1="678.3" y1="500.5" x2="679.3" y2="513.5" stroke="#444" stroke-width="0.6"/>
<line x1="680.2" y1="500.5" x2="681.2" y2="513.5" stroke="#444" stroke-width="0.6"/>
<line x1="682.1" y1="500.5" x2="683.1" y2="513.5" stroke="#444" stroke-width="0.6"/>
<line x1="684.0" y1="500.5" x2="685.0" y2="513.5" stroke="#444" stroke-width="0.6"/>
<line x1="685.9" y1="500.5" x2="686.9" y2="513.5" stroke="#444" stroke-width="0.6"/>
<line x1="687.8" y1="500.5" x2="688.8" y2="513.5" stroke="#444" stroke-width="0.6"/>
<ellipse cx="690.0" cy="507.0" rx="3.2" ry="6.5" transform="rotate(0 690.0 507.0)" fill="#fff" stroke="#2b2b2b" stroke-width="0.8"/>
</g>
<line x1="663.2" y1="459.8" x2="663.2" y2="482.0" stroke="#383838" stroke-width="0.8"/>
<text x="648.5" y="456.4" class="lb">92005</text>
<g transform="translate(662 555) rotate(24)">
<path d="M3 -2.5 L20 -2.5 L20 2.5 L3 2.5 Z" fill="#fff" stroke="#2b2b2b" stroke-width="0.8" />
<line x1="5.0" y1="-2.5" x2="6.0" y2="2.5" stroke="#444" stroke-width="0.6"/>
<line x1="7.2" y1="-2.5" x2="8.2" y2="2.5" stroke="#444" stroke-width="0.6"/>
<line x1="9.4" y1="-2.5" x2="10.4" y2="2.5" stroke="#444" stroke-width="0.6"/>
<line x1="11.6" y1="-2.5" x2="12.6" y2="2.5" stroke="#444" stroke-width="0.6"/>
<line x1="13.8" y1="-2.5" x2="14.8" y2="2.5" stroke="#444" stroke-width="0.6"/>
<line x1="16.0" y1="-2.5" x2="17.0" y2="2.5" stroke="#444" stroke-width="0.6"/>
<line x1="18.2" y1="-2.5" x2="19.2" y2="2.5" stroke="#444" stroke-width="0.6"/>
<path d="M-1 -5.5 L3 -5.5 L3 5.5 L-1 5.5 Z" fill="#fff" stroke="#2b2b2b" stroke-width="0.8" />
<path d="M-5 -6 L-1 -6 L-1 6 L-5 6 Z" fill="#fff" stroke="#2b2b2b" stroke-width="0.8" />
<ellipse cx="-5.0" cy="0.0" rx="2.3" ry="6.0" transform="rotate(0 -5.0 0.0)" fill="#fff" stroke="#2b2b2b" stroke-width="0.8"/>
<line x1="-3.0" y1="-3.5" x2="-3.0" y2="3.5" stroke="#555" stroke-width="0.5"/>
</g>
<line x1="663.9" y1="562.0" x2="663.9" y2="584.4" stroke="#383838" stroke-width="0.8"/>
<text x="653.9" y="594.2" class="lb">130B</text>
</svg>

<div class="row" style="top:672px;background:#fff">
  <svg class="ic" style="left:36px;top:0px" width="18" height="17"><path d="M1.8 15.8 C1.5 9 5 5.5 12 5 L11.5 1.5 L18 4.5 L13.5 10 L13 7.8 C8 8.5 5 11 2.8 15.8 Z" fill="#0a0a0a"/></svg>
  <svg class="ic" style="left:73px;top:1px" width="15" height="16"><use href="#note"/></svg>
  <div class="td c" style="left:147px">130B</div>
  <div class="td" style="left:261px">130G0625</div>
  <div class="td c" style="left:501.5px">BOLT-FLANGED,6X25</div>
  <div class="td c" style="left:699px">2</div>
</div>
<div class="row" style="top:690px;background:#e6e3df">
  <svg class="ic" style="left:73px;top:1px" width="15" height="16"><use href="#note"/></svg>
  <div class="td c" style="left:147px">600</div>
  <div class="td" style="left:261px">600A1300</div>
  <div class="td c" style="left:501.5px">BALL-STEEL,13/32"</div>
  <div class="td c" style="left:699px">1</div>
</div>
<div class="row sel" style="top:708px;background:#6b9bd6">
  <svg class="ic" style="left:73px;top:1px" width="15" height="16"><use href="#note"/></svg>
  <div class="td c" style="left:147px">670</div>
  <div class="td" style="left:261px">670B2011</div>
  <div class="td c" style="left:501.5px">O RING,11MM</div>
  <div class="td c" style="left:699px">1</div>
</div>
<div class="row" style="top:726px;background:#e6e3df">
  <svg class="ic" style="left:73px;top:1px" width="15" height="16"><use href="#note"/></svg>
  <div class="td c" style="left:147px">670A</div>
  <div class="td" style="left:261px">670D2016</div>
  <div class="td c" style="left:501.5px">O RING,16MM</div>
  <div class="td c" style="left:699px">1</div>
</div>
<div class="row" style="top:744px;background:#fff">
  <svg class="ic" style="left:19px;top:-0.5px" width="18" height="17"><path d="M16.2 15.5 C16 10 12.5 5.5 6 5.3 L6 1.5 L1 6.2 L6 10.8 L6 9 C10.5 9.2 12.5 12 13.2 15.5 Z" fill="#0a0a0a"/></svg>
  <svg class="ic" style="left:73px;top:1px" width="15" height="16"><use href="#note"/></svg>
  <div class="td c" style="left:147px">670B</div>
  <div class="td" style="left:261px">670D2022</div>
  <div class="td c" style="left:501.5px">O RING</div>
  <div class="td c" style="left:699px">1</div>
</div>

<div id="thead">
  <svg class="ic" style="left:76px;top:11px" width="9" height="10"><use href="#sorti"/></svg>
  <div class="th" style="left:127px">Ref #</div>
  <svg class="ic" style="left:188px;top:11px" width="9" height="10"><use href="#sorti"/></svg>
  <div class="th" style="left:264px">Part #</div>
  <svg class="ic" style="left:353px;top:11px" width="9" height="10"><use href="#sorti"/></svg>
  <svg class="ic" style="left:458px;top:7px" width="12" height="12"><use href="#hcb"/></svg>
  <div class="th" style="left:472.5px">Description</div>
  <svg class="ic" style="left:619px;top:11px" width="9" height="10"><use href="#sorti"/></svg>
  <svg class="ic" style="left:676px;top:7px" width="12" height="12"><use href="#hcb"/></svg>
  <div class="th" style="left:690px">Qty</div>
  <svg class="ic" style="left:748px;top:11px" width="9" height="10"><use href="#sorti"/></svg>
  <svg class="ic" style="left:835px;top:7px" width="12" height="12"><use href="#hcb"/></svg>
  <div class="th" style="left:848.5px">Context No</div>
</div>
</body></html>
